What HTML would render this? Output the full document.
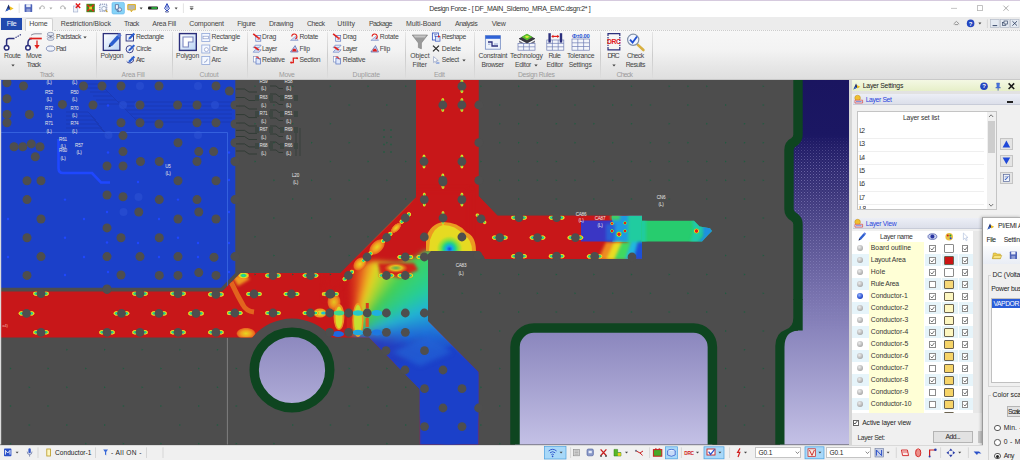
<!DOCTYPE html><html><head><meta charset="utf-8"><title>Design Force</title><style>
html,body{margin:0;padding:0}
body{width:1020px;height:460px;overflow:hidden;position:relative;background:#fff;font-family:"Liberation Sans",sans-serif;font-size:7.4px;color:#3a3a3a;line-height:1}
.a{position:absolute;white-space:nowrap}
.t{position:absolute;white-space:nowrap;font-size:7.4px;color:#444;letter-spacing:-0.15px}
.g{position:absolute;white-space:nowrap;font-size:7.2px;color:#9a9a9a;letter-spacing:-0.1px}
.c{text-align:center}
svg{position:absolute;left:0;top:0}
</style></head><body><div id="wrap" style="position:absolute;left:0;top:0;width:1020px;height:460px">
<div class="a" style="left:0;top:0;width:1020px;height:1px;background:#d6cade"></div>
<div class="a" style="left:0;top:1px;width:1020px;height:16px;background:#fff"></div>
<div class="a" style="left:0;top:17px;width:1020px;height:13px;background:#ececec"></div>
<div class="a" style="left:0;top:30px;width:1020px;height:50px;background:linear-gradient(#f7f7f7,#f3f3f3 40%,#e6e6e6 75%,#dedede)"></div>
<div class="a" style="left:0;top:79px;width:1020px;height:1px;background:#c9c9c9"></div>
<div class="a" style="left:54px;top:30px;width:966px;height:0;border-top:1px dotted #cdcdcd"></div>
<div class="a" style="left:1px;top:18px;width:21px;height:12px;background:#2049ae"></div>
<div class="a" style="left:25px;top:18px;width:28px;height:13px;background:#fbfbfb;border:1px solid #d2d2d2;border-bottom:none;box-sizing:border-box;border-radius:2px 2px 0 0"></div>
<div class="a" style="left:29.30px;top:19.94px;font-size:7.00px;letter-spacing:-0.090px;color:#444;">Home</div>
<div class="a" style="left:60.70px;top:19.94px;font-size:7.00px;letter-spacing:-0.114px;color:#444;">Restriction/Block</div>
<div class="a" style="left:124.00px;top:19.94px;font-size:7.00px;letter-spacing:-0.485px;color:#444;">Track</div>
<div class="a" style="left:152.30px;top:19.94px;font-size:7.00px;letter-spacing:-0.246px;color:#444;">Area Fill</div>
<div class="a" style="left:189.30px;top:19.94px;font-size:7.00px;letter-spacing:-0.186px;color:#444;">Component</div>
<div class="a" style="left:237.30px;top:19.94px;font-size:7.00px;letter-spacing:-0.288px;color:#444;">Figure</div>
<div class="a" style="left:269.00px;top:19.94px;font-size:7.00px;letter-spacing:-0.229px;color:#444;">Drawing</div>
<div class="a" style="left:307.00px;top:19.94px;font-size:7.00px;letter-spacing:-0.460px;color:#444;">Check</div>
<div class="a" style="left:337.30px;top:19.94px;font-size:7.00px;letter-spacing:0.098px;color:#444;">Utility</div>
<div class="a" style="left:369.00px;top:19.94px;font-size:7.00px;letter-spacing:-0.657px;color:#444;">Package</div>
<div class="a" style="left:406.00px;top:19.94px;font-size:7.00px;letter-spacing:-0.079px;color:#444;">Multi-Board</div>
<div class="a" style="left:455.00px;top:19.94px;font-size:7.00px;letter-spacing:-0.481px;color:#444;">Analysis</div>
<div class="a" style="left:491.70px;top:19.94px;font-size:7.00px;letter-spacing:-0.349px;color:#444;">View</div>
<div class="a" style="left:6.70px;top:19.94px;font-size:7.00px;letter-spacing:-0.426px;color:#eef2fc;">File</div>
<div class="a" style="left:429.30px;top:5.44px;font-size:7.00px;letter-spacing:-0.365px;color:#333;">Design Force - [ DF_MAIN_SIdemo_MRA_EMC.dsgn:2* ]</div>
<div class="a" style="left:4.10px;top:53.06px;font-size:6.80px;letter-spacing:-0.336px;color:#444444;">Route</div>
<div class="a" style="left:25.90px;top:53.06px;font-size:6.80px;letter-spacing:-0.242px;color:#444444;">Move</div>
<div class="a" style="left:26.80px;top:62.06px;font-size:6.80px;letter-spacing:-0.637px;color:#444444;">Track</div>
<div class="a" style="left:100.40px;top:53.06px;font-size:6.80px;letter-spacing:-0.245px;color:#444444;">Polygon</div>
<div class="a" style="left:176.10px;top:53.06px;font-size:6.80px;letter-spacing:-0.245px;color:#444444;">Polygon</div>
<div class="a" style="left:410.20px;top:53.06px;font-size:6.80px;letter-spacing:-0.050px;color:#444444;">Object</div>
<div class="a" style="left:412.50px;top:62.06px;font-size:6.80px;letter-spacing:-0.142px;color:#444444;">Filter</div>
<div class="a" style="left:478.60px;top:53.06px;font-size:6.80px;letter-spacing:-0.232px;color:#444444;">Constraint</div>
<div class="a" style="left:481.50px;top:62.06px;font-size:6.80px;letter-spacing:-0.406px;color:#444444;">Browser</div>
<div class="a" style="left:510.10px;top:53.06px;font-size:6.80px;letter-spacing:-0.189px;color:#444444;">Technology</div>
<div class="a" style="left:515.10px;top:62.06px;font-size:6.80px;letter-spacing:-0.293px;color:#444444;">Editor</div>
<div class="a" style="left:548.40px;top:53.06px;font-size:6.80px;letter-spacing:-0.528px;color:#444444;">Rule</div>
<div class="a" style="left:546.50px;top:62.06px;font-size:6.80px;letter-spacing:-0.213px;color:#444444;">Editor</div>
<div class="a" style="left:566.90px;top:53.06px;font-size:6.80px;letter-spacing:-0.223px;color:#444444;">Tolerance</div>
<div class="a" style="left:568.70px;top:62.06px;font-size:6.80px;letter-spacing:-0.210px;color:#444444;">Settings</div>
<div class="a" style="left:607.50px;top:53.06px;font-size:6.80px;letter-spacing:-1.316px;color:#444444;">DRC</div>
<div class="a" style="left:627.00px;top:53.06px;font-size:6.80px;letter-spacing:-0.543px;color:#444444;">Check</div>
<div class="a" style="left:625.70px;top:62.06px;font-size:6.80px;letter-spacing:-0.496px;color:#444444;">Results</div>
<div class="a" style="left:56.00px;top:34.06px;font-size:6.80px;letter-spacing:-0.381px;color:#444444;">Padstack</div>
<div class="a" style="left:56.00px;top:45.66px;font-size:6.80px;letter-spacing:-0.949px;color:#444444;">Pad</div>
<div class="a" style="left:135.90px;top:34.06px;font-size:6.80px;letter-spacing:-0.302px;color:#444444;">Rectangle</div>
<div class="a" style="left:135.90px;top:45.66px;font-size:6.80px;letter-spacing:-0.336px;color:#444444;">Circle</div>
<div class="a" style="left:135.90px;top:57.06px;font-size:6.80px;letter-spacing:-0.700px;color:#444444;">Arc</div>
<div class="a" style="left:211.60px;top:34.06px;font-size:6.80px;letter-spacing:-0.252px;color:#444444;">Rectangle</div>
<div class="a" style="left:211.60px;top:45.66px;font-size:6.80px;letter-spacing:-0.256px;color:#444444;">Circle</div>
<div class="a" style="left:211.60px;top:57.06px;font-size:6.80px;letter-spacing:-0.500px;color:#444444;">Arc</div>
<div class="a" style="left:262.00px;top:34.06px;font-size:6.80px;letter-spacing:-0.146px;color:#444444;">Drag</div>
<div class="a" style="left:262.00px;top:45.66px;font-size:6.80px;letter-spacing:-0.452px;color:#444444;">Layer</div>
<div class="a" style="left:262.00px;top:57.06px;font-size:6.80px;letter-spacing:-0.224px;color:#444444;">Relative</div>
<div class="a" style="left:299.40px;top:34.06px;font-size:6.80px;letter-spacing:-0.207px;color:#444444;">Rotate</div>
<div class="a" style="left:299.40px;top:45.66px;font-size:6.80px;letter-spacing:-0.119px;color:#444444;">Flip</div>
<div class="a" style="left:299.40px;top:57.06px;font-size:6.80px;letter-spacing:-0.247px;color:#444444;">Section</div>
<div class="a" style="left:342.80px;top:34.06px;font-size:6.80px;letter-spacing:-0.313px;color:#444444;">Drag</div>
<div class="a" style="left:342.80px;top:45.66px;font-size:6.80px;letter-spacing:-0.552px;color:#444444;">Layer</div>
<div class="a" style="left:342.80px;top:57.06px;font-size:6.80px;letter-spacing:-0.267px;color:#444444;">Relative</div>
<div class="a" style="left:379.70px;top:34.06px;font-size:6.80px;letter-spacing:-0.187px;color:#444444;">Rotate</div>
<div class="a" style="left:379.70px;top:45.66px;font-size:6.80px;letter-spacing:-0.119px;color:#444444;">Flip</div>
<div class="a" style="left:441.70px;top:34.06px;font-size:6.80px;letter-spacing:-0.453px;color:#444444;">Reshape</div>
<div class="a" style="left:441.70px;top:45.66px;font-size:6.80px;letter-spacing:-0.071px;color:#444444;">Delete</div>
<div class="a" style="left:441.70px;top:57.06px;font-size:6.80px;letter-spacing:-0.280px;color:#444444;">Select</div>
<div class="a" style="left:39.70px;top:72.06px;font-size:6.80px;letter-spacing:-0.562px;color:#9c9c9c;">Track</div>
<div class="a" style="left:121.60px;top:72.06px;font-size:6.80px;letter-spacing:-0.230px;color:#9c9c9c;">Area Fill</div>
<div class="a" style="left:199.60px;top:72.06px;font-size:6.80px;letter-spacing:-0.207px;color:#9c9c9c;">Cutout</div>
<div class="a" style="left:279.00px;top:72.06px;font-size:6.80px;letter-spacing:-0.276px;color:#9c9c9c;">Move</div>
<div class="a" style="left:352.60px;top:72.06px;font-size:6.80px;letter-spacing:-0.106px;color:#9c9c9c;">Duplicate</div>
<div class="a" style="left:433.90px;top:72.06px;font-size:6.80px;letter-spacing:-0.206px;color:#9c9c9c;">Edit</div>
<div class="a" style="left:517.90px;top:72.06px;font-size:6.80px;letter-spacing:-0.313px;color:#9c9c9c;">Design Rules</div>
<div class="a" style="left:616.40px;top:72.06px;font-size:6.80px;letter-spacing:-0.668px;color:#9c9c9c;">Check</div>
<div class="a" style="left:95.6px;top:32px;width:1px;height:46px;background:linear-gradient(#e4e4e4,#c8c8c8 50%,#dcdcdc);opacity:.9"></div>
<div class="a" style="left:171.8px;top:32px;width:1px;height:46px;background:linear-gradient(#e4e4e4,#c8c8c8 50%,#dcdcdc);opacity:.9"></div>
<div class="a" style="left:246.7px;top:32px;width:1px;height:46px;background:linear-gradient(#e4e4e4,#c8c8c8 50%,#dcdcdc);opacity:.9"></div>
<div class="a" style="left:327.1px;top:32px;width:1px;height:46px;background:linear-gradient(#e4e4e4,#c8c8c8 50%,#dcdcdc);opacity:.9"></div>
<div class="a" style="left:405.0px;top:32px;width:1px;height:46px;background:linear-gradient(#e4e4e4,#c8c8c8 50%,#dcdcdc);opacity:.9"></div>
<div class="a" style="left:473.5px;top:32px;width:1px;height:46px;background:linear-gradient(#e4e4e4,#c8c8c8 50%,#dcdcdc);opacity:.9"></div>
<div class="a" style="left:599.8px;top:32px;width:1px;height:46px;background:linear-gradient(#e4e4e4,#c8c8c8 50%,#dcdcdc);opacity:.9"></div>
<div class="a" style="left:651.7px;top:32px;width:1px;height:46px;background:linear-gradient(#e4e4e4,#c8c8c8 50%,#dcdcdc);opacity:.9"></div>
<svg width="4" height="3" style="left:10.6px;top:63.9px" viewBox="0 0 4 3"><path d="M0.3 0.4 L3.7 0.4 L2 2.6 Z" fill="#444"/></svg>
<svg width="4" height="3" style="left:83.4px;top:35.9px" viewBox="0 0 4 3"><path d="M0.3 0.4 L3.7 0.4 L2 2.6 Z" fill="#444"/></svg>
<svg width="4" height="3" style="left:461.8px;top:58.9px" viewBox="0 0 4 3"><path d="M0.3 0.4 L3.7 0.4 L2 2.6 Z" fill="#444"/></svg>
<svg width="4" height="3" style="left:533.5px;top:63.9px" viewBox="0 0 4 3"><path d="M0.3 0.4 L3.7 0.4 L2 2.6 Z" fill="#444"/></svg>
<svg width="4" height="3" style="left:611.6px;top:63.9px" viewBox="0 0 4 3"><path d="M0.3 0.4 L3.7 0.4 L2 2.6 Z" fill="#444"/></svg>
<svg width="1020" height="80" viewBox="0 0 1020 80" style="left:0;top:0">
<defs><linearGradient id="pg" x1="0" y1="0" x2="1" y2="1"><stop offset="0" stop-color="#ffffff"/><stop offset="1" stop-color="#b9d3f4"/></linearGradient></defs>
<g fill="none" stroke="#2b2f7c" stroke-width="1.5"><circle cx="6.6" cy="47.8" r="2.3" fill="#fff"/><path d="M6.6 45.3 L6.6 40.5 Q6.6 38.4 9 38.4 L14.5 38.4"/><path d="M15.5 37.6 L21.5 34.2" stroke-width="1.1" stroke-dasharray="1.4 1"/></g>
<g fill="none"><path d="M31 35.2 Q33 33.8 35 33.8 L41.8 33.8" stroke="#8a8a9a" stroke-width="1"/><circle cx="28" cy="47.8" r="2.3" fill="#fff" stroke="#2b2f7c" stroke-width="1.5"/><path d="M28 45.3 L28 42 Q28.5 38.6 32 38.4" stroke="#2b2f7c" stroke-width="1.5"/><path d="M29.5 38.5 L41.8 38.5" stroke="#e0201c" stroke-width="1.7"/><path d="M37 40.5 L37 46" stroke="#e0201c" stroke-width="1.3"/><path d="M34.4 45 L39.6 45 L37 49 Z" fill="#e0201c"/></g>
<g><rect x="103.3" y="33.6" width="16.6" height="16.8" fill="url(#pg)" stroke="#2b2f7c" stroke-width="1.3"/><path d="M109.5 43.8 L117.2 35.3 L120.3 37.6 L112.4 45.8 L108.6 47.2 Z" fill="#2c5fd0"/><path d="M117 35 L119 33 L121.6 35.2 L120 37.4 Z" fill="#5a7ad8"/><path d="M108.6 47.2 L109.3 44.6 L111 46.3 Z" fill="#223"/></g>
<g><rect x="179.5" y="33.6" width="16.8" height="16.8" fill="url(#pg)" stroke="#2b2f7c" stroke-width="1.4"/><path d="M183 37 L193 37 L193 42 L188.4 42 L188.4 47 L183 47 Z" fill="#fff" stroke="#7a86c0" stroke-width="1.1"/></g>
<path d="M412.2 35 L427.6 35 L421.4 43 L421.4 48.8 L418.4 47.6 L418.4 43 Z" fill="#9a9a9a" stroke="#7a7a7a" stroke-width="0.6"/><path d="M413.5 35.6 L426.3 35.6 L424.6 37.6 L415.2 37.6 Z" fill="#c4c4c4"/>
<g><rect x="485.4" y="35.6" width="15" height="13.6" fill="#eef3fb" stroke="#7f95c8" stroke-width="0.9"/><rect x="485.4" y="35.6" width="15" height="3.2" fill="#2f62d6"/><path d="M488 42 L492 42 L492 46 L498 46" fill="none" stroke="#2b2f7c" stroke-width="1.3"/><path d="M488 44.2 L490.4 44.2 M494 44 L498 44" stroke="#7f95c8" stroke-width="0.8"/></g>
<g><path d="M519 38.5 L527 34 L535 38.5 L527 43 Z" fill="#3a3a44"/><path d="M519 40.5 L527 45 L535 40.5 L535 42.2 L527 46.6 L519 42.2 Z" fill="#6c6c7c"/><path d="M521.5 37 L527 33.8 L532.5 37 L527 40.2 Z" fill="#58c22c"/><path d="M524.5 36.8 L527 35.4 L529.5 36.8 L527 38.2 Z" fill="#d8e83c"/><rect x="518" y="43.4" width="17" height="6.8" fill="#f4f6fb" stroke="#6f7db4" stroke-width="0.7"/><path d="M518 46.8 L535 46.8 M523.6 43.4 L523.6 50.2 M529.3 43.4 L529.3 50.2" stroke="#6f7db4" stroke-width="0.7"/><path d="M519 38.5 L527 43 L535 38.5" fill="none" stroke="#22222c" stroke-width="0.8"/></g>
<g><rect x="546.8" y="40" width="17" height="10.2" fill="#f4f6fb" stroke="#6f7db4" stroke-width="0.7"/><path d="M546.8 43.4 L563.8 43.4 M546.8 46.8 L563.8 46.8 M552.4 40 L552.4 50.2 M558.2 40 L558.2 50.2" stroke="#6f7db4" stroke-width="0.7"/><rect x="548.4" y="33.2" width="2.4" height="9.4" fill="#2b2f7c"/><rect x="559.8" y="33.2" width="2.4" height="9.4" fill="#2b2f7c"/><path d="M552 36.4 L558.6 36.4" stroke="#e0201c" stroke-width="1.2"/><path d="M551.2 36.4 L553.4 34.8 L553.4 38 Z M559.4 36.4 L557.2 34.8 L557.2 38 Z" fill="#e0201c"/></g>
<g><rect x="572" y="39" width="17.4" height="11.2" fill="#f4f6fb" stroke="#6f7db4" stroke-width="0.7"/><path d="M572 42.8 L589.4 42.8 M572 46.5 L589.4 46.5 M577.8 39 L577.8 50.2 M583.6 39 L583.6 50.2" stroke="#6f7db4" stroke-width="0.7"/><text x="580.7" y="38" font-family="Liberation Sans, sans-serif" font-weight="bold" font-size="5.8" fill="#1f4fd0" text-anchor="middle" letter-spacing="-0.3">Φ±0.00</text></g>
<g><path d="M608 36 L608 33.6 L619.8 33.6 L619.8 36 M608 47 L608 49.8 L619.8 49.8 L619.8 47" fill="none" stroke="#2b2f7c" stroke-width="1.2"/><path d="M608 37 L608 46 M619.8 37 L619.8 46" stroke="#2b2f7c" stroke-width="1.2" stroke-dasharray="1.4 1.2"/><text x="613.7" y="44.2" font-family="Liberation Sans, sans-serif" font-weight="bold" font-size="6.8" fill="#e0201c" text-anchor="middle" letter-spacing="-0.5">DRC</text></g>
<g><path d="M637.6 44.6 L643.4 50" stroke="#d8b040" stroke-width="2.6" stroke-linecap="round"/><circle cx="633.2" cy="39.8" r="5.6" fill="#f2f6ff" stroke="#8090a8" stroke-width="1.2"/><path d="M630 39.6 L632.6 42.6 L637 36.4" fill="none" stroke="#1f4fd0" stroke-width="1.8"/></g>
<g fill="#e8ecf4" stroke="#7c87a8" stroke-width="0.7"><ellipse cx="50.6" cy="38.8" rx="3.4" ry="1.6"/><ellipse cx="50.6" cy="36.4" rx="3.4" ry="1.6"/><ellipse cx="50.6" cy="34" rx="3.4" ry="1.6"/></g><path d="M49 36.2 L52.2 36.2 L50.6 37.6 Z" fill="#445"/>
<ellipse cx="50.6" cy="48.6" rx="4.2" ry="2.6" fill="#eef2fa" stroke="#6f80b0" stroke-width="0.9"/>
<rect x="126.1" y="34.6" width="7.4" height="6.4" fill="#eef3fc" stroke="#2b2f7c" stroke-width="0.9"/>
<path d="M128.9 37.6 l4.6 -4.8 l1.6 1.4 l-4.6 4.8 l-2.2 0.8 z" fill="#2c5fd0"/>
<circle cx="129.7" cy="49.2" r="3.6" fill="#eef3fc" stroke="#2b2f7c" stroke-width="0.9"/>
<path d="M128.9 49.2 l4.6 -4.8 l1.6 1.4 l-4.6 4.8 l-2.2 0.8 z" fill="#2c5fd0"/>
<path d="M126.7 61.4 a3.6 3 0 1 0 5 -4" fill="#dfe8fa" stroke="#2b2f7c" stroke-width="0.9"/>
<path d="M128.9 60.6 l4.6 -4.8 l1.6 1.4 l-4.6 4.8 l-2.2 0.8 z" fill="#2c5fd0"/>
<rect x="201.8" y="33.4" width="8" height="8" fill="#f4f8ff" stroke="#8fa6d8" stroke-width="0.8"/>
<rect x="203.0" y="36.2" width="5.6" height="2.6" fill="#fff" stroke="#7a8cc0" stroke-width="0.6"/>
<rect x="201.8" y="45.0" width="8" height="8" fill="#f4f8ff" stroke="#8fa6d8" stroke-width="0.8"/>
<circle cx="206.4" cy="49.6" r="2" fill="#fff" stroke="#7a8cc0" stroke-width="0.6"/>
<rect x="201.8" y="56.4" width="8" height="8" fill="#f4f8ff" stroke="#8fa6d8" stroke-width="0.8"/>
<path d="M204.0 62.4 q3 -0.4 3.4 -3.6" fill="none" stroke="#7a8cc0" stroke-width="0.7"/>
<rect x="255.8" y="35.6" width="5" height="5.6" fill="#f4f8ff" stroke="#5570c0" stroke-width="0.7"/><path d="M253.2 33.8 l5.4 4.4" stroke="#e0201c" stroke-width="1.6"/><path d="M257.2 39.6 l2.6 0 l0 -2.6 z" fill="#e0201c"/>
<path d="M255.2 45.2 l6 0 l-2 2.4 l-6 0 z" fill="#dfe8fa" stroke="#5570c0" stroke-width="0.6"/><path d="M255.2 49.8 l6 0 l-2 2.4 l-6 0 z" fill="#dfe8fa" stroke="#5570c0" stroke-width="0.6"/><path d="M254.4 47.0 l4.4 3" stroke="#e0201c" stroke-width="1.6"/>
<rect x="253.4" y="56.4" width="4.6" height="5.6" fill="#fff" stroke="#7a8cc0" stroke-width="0.6"/><rect x="256.0" y="58.4" width="4.6" height="5.6" fill="#dfe8fa" stroke="#5570c0" stroke-width="0.7"/><path d="M255.8 57.0 q3 -0.6 3.6 2.4" fill="none" stroke="#e0201c" stroke-width="1"/>
<rect x="335.7" y="35.6" width="5" height="5.6" fill="#f4f8ff" stroke="#5570c0" stroke-width="0.7"/><path d="M333.1 33.8 l5.4 4.4" stroke="#e0201c" stroke-width="1.6"/><path d="M337.1 39.6 l2.6 0 l0 -2.6 z" fill="#e0201c"/>
<path d="M335.1 45.2 l6 0 l-2 2.4 l-6 0 z" fill="#dfe8fa" stroke="#5570c0" stroke-width="0.6"/><path d="M335.1 49.8 l6 0 l-2 2.4 l-6 0 z" fill="#dfe8fa" stroke="#5570c0" stroke-width="0.6"/><path d="M334.3 47.0 l4.4 3" stroke="#e0201c" stroke-width="1.6"/>
<rect x="333.3" y="56.4" width="4.6" height="5.6" fill="#fff" stroke="#7a8cc0" stroke-width="0.6"/><rect x="335.9" y="58.4" width="4.6" height="5.6" fill="#dfe8fa" stroke="#5570c0" stroke-width="0.7"/><path d="M335.7 57.0 q3 -0.6 3.6 2.4" fill="none" stroke="#e0201c" stroke-width="1"/>
<path d="M290.5 40.4 l7.6 0 l-2.6 -4 z" fill="#c9d6f4" stroke="#6678b8" stroke-width="0.5"/><path d="M291.7 36.6 a2.6 2.6 0 1 1 3.6 2.4" fill="none" stroke="#e0201c" stroke-width="1.1"/>
<path d="M290.5 52.0 l7.6 0 l-3 -6.4 z" fill="#c9d6f4" stroke="#3a4a9a" stroke-width="0.6"/><path d="M291.9 51.6 l5 0 l-1.4 -2.8 l-2.2 0 z" fill="#e0201c"/>
<path d="M290.9 62.6 l2.4 0 l0 -4.4 l3.6 0" fill="none" stroke="#e0201c" stroke-width="1.3"/><circle cx="291.1" cy="62.6" r="1" fill="#e0201c"/><circle cx="297.1" cy="58.2" r="1" fill="#e0201c"/>
<path d="M370.9 40.4 l7.6 0 l-2.6 -4 z" fill="#c9d6f4" stroke="#6678b8" stroke-width="0.5"/><path d="M372.1 36.6 a2.6 2.6 0 1 1 3.6 2.4" fill="none" stroke="#e0201c" stroke-width="1.1"/>
<path d="M370.9 52.0 l7.6 0 l-3 -6.4 z" fill="#c9d6f4" stroke="#3a4a9a" stroke-width="0.6"/><path d="M372.3 51.6 l5 0 l-1.4 -2.8 l-2.2 0 z" fill="#e0201c"/>
<rect x="432.4" y="33" width="6" height="7" fill="#f4f8ff" stroke="#3f5cc0" stroke-width="0.9"/><rect x="435.4" y="36.6" width="4.6" height="4.6" fill="#d8e4fa" stroke="#3f5cc0" stroke-width="0.7"/><path d="M434 34.6 l3 0 M434 36 l2 0" stroke="#3f5cc0" stroke-width="0.6"/><circle cx="438.8" cy="36.4" r="1" fill="#e0201c"/>
<path d="M433 45.6 L439 51.4 M439 45.6 L433 51.4" stroke="#2a2a2a" stroke-width="1.3"/>
<path d="M433.6 56.6 L433.6 62.6 L435.2 61.2 L436.4 63.6 L437.4 63 L436.2 60.8 L438.2 60.6 Z" fill="#fff" stroke="#7f8fb8" stroke-width="0.6"/><rect x="436.4" y="62" width="3" height="2" fill="#9ab0e0"/>
<path d="M5.4 11.6 L8.6 4.4 L10 7.4 L12.6 8.6 L9.6 9.6 Z" fill="#1c2a6c"/><path d="M9.6 6.2 L13.6 8.4 L10 10.6 Z" fill="#f0c020"/><path d="M5.4 11.6 L9.6 9.6 L8 8 Z" fill="#3a70d8"/>
<path d="M19.2 3.4 L19.2 13" stroke="#dcdcdc" stroke-width="0.8"/>
<rect x="24.6" y="4.2" width="7.6" height="7.8" rx="0.6" fill="#4c62b8"/><rect x="26.2" y="4.2" width="4.4" height="3" fill="#e8ecf8"/><rect x="26.4" y="8.6" width="4" height="3.4" fill="#8e9cd4"/>
<path d="M40 8.6 q0.4 -3.4 3.4 -2.6 q1.6 0.8 0.6 3" fill="none" stroke="#b0b0b0" stroke-width="1"/><path d="M38.8 7.4 l2.6 0.4 l-1.6 2 z" fill="#b0b0b0"/>
<path d="M49.4 7.6 l3 0 l-1.5 1.8 z" fill="#a8a8a8"/>
<path d="M65 8.6 q-0.4 -3.4 -3.4 -2.6 q-1.6 0.8 -0.6 3" fill="none" stroke="#b0b0b0" stroke-width="1"/><path d="M66.2 7.4 l-2.6 0.4 l1.6 2 z" fill="#b0b0b0"/>
<rect x="73.6" y="6" width="4.2" height="6" fill="#eef2fa" stroke="#9aa8c8" stroke-width="0.6"/><path d="M75.8 3.6 L80.2 8 M80.2 3.6 L75.8 8" stroke="#e01818" stroke-width="1.4"/>
<rect x="86.4" y="3.8" width="8.4" height="8.4" fill="#3c8c1c"/><path d="M87.4 4.8 L93.8 11.2 M93.8 4.8 L87.4 11.2" stroke="#e02818" stroke-width="1.6"/><rect x="89.2" y="6.6" width="2.8" height="2.8" fill="#e8d020"/>
<rect x="99.8" y="4.2" width="7" height="7" fill="#eef4fc" stroke="#5a6a9c" stroke-width="0.8" stroke-dasharray="1.2 0.8"/><circle cx="104" cy="8.6" r="2.2" fill="#f8fbff" stroke="#8898b8" stroke-width="0.7"/><path d="M105.6 10.2 l1.8 1.8" stroke="#c8a030" stroke-width="1.1"/>
<rect x="112" y="2.4" width="12.4" height="11.6" rx="1.4" fill="#86d3f7" stroke="#5ab4ec" stroke-width="0.6"/><path d="M115.4 4.6 l3 0 l0 3.6 l-1 1 l-2 0 z" fill="#f4f8ff" stroke="#4a5a8c" stroke-width="0.7"/><circle cx="119.8" cy="9.6" r="1.8" fill="#e8eef8" stroke="#4a5a8c" stroke-width="0.7"/><path d="M117 9.2 l0 2 l2 0.6" fill="none" stroke="#4a5a8c" stroke-width="0.7"/>
<path d="M127.8 4.6 L135.4 4.6 L135.4 9.8 L132.6 9.8 L131.4 11.8 L130.6 9.8 L127.8 9.8 Z" fill="#b8b8b0" stroke="#e0b020" stroke-width="1"/>
<path d="M139.6 7.6 l3 0 l-1.5 1.8 z" fill="#444"/>
<rect x="148" y="6.6" width="10" height="2.8" rx="1" fill="#1c1c1c"/><rect x="151.4" y="7.2" width="5.8" height="1.6" fill="#30c040"/>
<path d="M167 3.6 L169.4 8.4 L167 11 L164.6 8.4 Z" fill="#dfe6fa" stroke="#2a44b8" stroke-width="1"/><path d="M167 5.4 L167 9" stroke="#2a44b8" stroke-width="0.7"/><path d="M165 11.6 q2 1 4 0" fill="none" stroke="#1c2c7c" stroke-width="0.8"/>
<path d="M174.6 7.6 l3 0 l-1.5 1.8 z" fill="#444"/>
<path d="M183.4 3.4 L183.4 13" stroke="#dcdcdc" stroke-width="0.8"/>
<path d="M189.8 6.6 l3.6 0 M190 8 l3.2 0 l-1.6 2 z" stroke="#666" stroke-width="0.7" fill="#666"/>
<path d="M951 8.4 L957 8.4" stroke="#b8b8b8" stroke-width="0.8"/><rect x="977.6" y="5.6" width="5" height="5" fill="none" stroke="#b4b4b4" stroke-width="0.8"/><path d="M1003.4 5.6 L1008.6 10.8 M1008.6 5.6 L1003.4 10.8" stroke="#9c9c9c" stroke-width="0.8"/>
<path d="M953.6 24 L956.4 21.4 L959.2 24 M954.6 24.6 L958.2 24.6" fill="none" stroke="#8a8a8a" stroke-width="0.9"/>
<circle cx="970.6" cy="23.4" r="3.8" fill="#2346c0"/><text x="970.6" y="25.6" font-family="Liberation Sans, sans-serif" font-weight="bold" font-size="6" fill="#fff" text-anchor="middle">?</text>
<path d="M978.4 22.6 l3 0 l-1.5 1.8 z" fill="#444"/>
<path d="M987.4 19.4 L987.4 28" stroke="#d0d0d0" stroke-width="0.8"/>
<rect x="990.6" y="19.4" width="8.6" height="8" fill="#e4eaf2" stroke="#b4bcc8" stroke-width="0.7"/>
<rect x="1000.6" y="19.4" width="8.6" height="8" fill="#e4eaf2" stroke="#b4bcc8" stroke-width="0.7"/>
<rect x="1010.4" y="19.4" width="8.6" height="8" fill="#e4eaf2" stroke="#b4bcc8" stroke-width="0.7"/>
<path d="M992.6 25.6 l4.6 0" stroke="#3a4a6a" stroke-width="1"/>
<rect x="1002.4" y="22.6" width="3.4" height="3" fill="none" stroke="#3a4a6a" stroke-width="0.7"/><rect x="1004" y="21" width="3.4" height="3" fill="#e4eaf2" stroke="#3a4a6a" stroke-width="0.7"/>
<path d="M1012.4 21.2 l4.6 4.4 M1017 21.2 l-4.6 4.4" stroke="#3a4a6a" stroke-width="0.9"/>
</svg>
<div class="a" style="left:0;top:80px;width:850px;height:365px;background:#4d4d4d"></div>
<svg width="850" height="460" viewBox="0 0 850 460" style="left:0;top:0">
<defs>
<clipPath id="cv"><rect x="0" y="80" width="850" height="364.6"/></clipPath>
<linearGradient id="lav" gradientUnits="userSpaceOnUse" x1="0" y1="80" x2="0" y2="445">
<stop offset="0" stop-color="#1a1560"/><stop offset="0.15" stop-color="#1b1763"/><stop offset="0.30" stop-color="#383278"/><stop offset="0.42" stop-color="#544e8f"/><stop offset="0.55" stop-color="#706aa7"/><stop offset="0.68" stop-color="#8984bc"/><stop offset="0.8" stop-color="#9e9acb"/><stop offset="1" stop-color="#c4c1e6"/></linearGradient>
<filter color-interpolation-filters="sRGB" id="b4" x="-30%" y="-30%" width="160%" height="160%"><feGaussianBlur color-interpolation-filters="sRGB" stdDeviation="4"/></filter>
<filter color-interpolation-filters="sRGB" id="b3" x="-30%" y="-30%" width="160%" height="160%"><feGaussianBlur color-interpolation-filters="sRGB" stdDeviation="2.6"/></filter>
<filter color-interpolation-filters="sRGB" id="b2" x="-30%" y="-30%" width="160%" height="160%"><feGaussianBlur color-interpolation-filters="sRGB" stdDeviation="1.5"/></filter>
<filter color-interpolation-filters="sRGB" id="b1" x="-30%" y="-30%" width="160%" height="160%"><feGaussianBlur color-interpolation-filters="sRGB" stdDeviation="0.7"/></filter>
<radialGradient id="halo"><stop offset="0" stop-color="#18b8e8"/><stop offset="0.35" stop-color="#30d868"/><stop offset="0.65" stop-color="#e8e020"/><stop offset="0.9" stop-color="#f08a20" stop-opacity="0.8"/><stop offset="1" stop-color="#e05020" stop-opacity="0"/></radialGradient>
<radialGradient id="halo2"><stop offset="0" stop-color="#30d868"/><stop offset="0.5" stop-color="#e8e020"/><stop offset="1" stop-color="#f08a20" stop-opacity="0"/></radialGradient>
<radialGradient id="blob"><stop offset="0" stop-color="#1848d8"/><stop offset="0.18" stop-color="#18a0e8"/><stop offset="0.36" stop-color="#20d090"/><stop offset="0.55" stop-color="#80e040"/><stop offset="0.8" stop-color="#e0dc22"/><stop offset="1" stop-color="#e6da22" stop-opacity="0"/></radialGradient>
<radialGradient id="oy"><stop offset="0" stop-color="#e8d820"/><stop offset="0.5" stop-color="#f0a020"/><stop offset="0.85" stop-color="#e86820"/><stop offset="1" stop-color="#e04818" stop-opacity="0"/></radialGradient>
<radialGradient id="hot"><stop offset="0" stop-color="#e81818"/><stop offset="0.4" stop-color="#e82018"/><stop offset="0.6" stop-color="#f0d020"/><stop offset="0.8" stop-color="#30d870"/><stop offset="1" stop-color="#20b0e0" stop-opacity="0"/></radialGradient>
<pattern id="dth" width="3" height="3" patternUnits="userSpaceOnUse"><rect x="0" y="0" width="1" height="1" fill="#9a96cc"/><rect x="1.5" y="1.5" width="1" height="1" fill="#9a96cc" opacity="0.6"/></pattern>
<linearGradient id="dmg" gradientUnits="userSpaceOnUse" x1="0" y1="135" x2="0" y2="330"><stop offset="0" stop-color="#000"/><stop offset="0.2" stop-color="#fff" stop-opacity="0.55"/><stop offset="0.5" stop-color="#fff" stop-opacity="0.45"/><stop offset="1" stop-color="#000"/></linearGradient>
<mask id="dm" maskUnits="userSpaceOnUse" x="780" y="80" width="80" height="370"><rect x="780" y="135" width="80" height="195" fill="url(#dmg)"/></mask>
<clipPath id="rr"><path d="M798 70 L798 134 A9 9 0 0 1 794 142 A9 9 0 0 0 789 150 L789 209 A9 9 0 0 0 794 217 A9 9 0 0 1 798 225 L798 331 L784 331 L780 344 L780 455 L870 455 L870 70 Z"/></clipPath>
<clipPath id="cu"><path d="M-5 291.4 L222 291.4 L240.5 273 L340.5 273 L416 197.5 L416 75 L478.5 75 L478.5 196 L497.5 215.7 L642 215.7 L642 259 L485 259 L484 256.5 L479 251 L431 251 L428 254 L428 321 L478.5 372 L478.5 450 L419.7 450 L419.7 389 L369 337.6 L331.7 337.6 A51 51 0 0 0 252.3 337.6 L-5 337.6 Z"/></clipPath>
</defs>
<g clip-path="url(#cv)">
<path d="M-5 75 L235.3 75 L235.3 273 L221 287.8 L-5 287.8 Z" fill="#1b40c9"/>
<g stroke="#1a39b4" stroke-width="1" fill="none" opacity="0.9">
<path d="M84 84 L100 84 L118 102 L232 102"/>
<path d="M87 88 L104 88 L122 106 L232 106"/>
<path d="M90 92 L108 92 L126 110 L232 110"/>
<path d="M93 96 L112 96 L130 114 L232 114"/>
<path d="M96 100 L116 100 L134 118 L232 118"/>
<path d="M99 104 L120 104 L138 122 L232 122"/>
<path d="M66 112 L88 112 L96 120"/>
<path d="M66 116 L91 116 L99 124"/>
<path d="M66 120 L94 120 L102 128"/>
<path d="M66 124 L97 124 L105 132"/>
<path d="M66 128 L100 128 L108 136"/>
</g>
<circle cx="108" cy="105.5" r="1.2" fill="#1f47ff"/>
<circle cx="108" cy="152.5" r="1.2" fill="#1f47ff"/>
<circle cx="198" cy="152.5" r="1.2" fill="#1f47ff"/>
<circle cx="229" cy="152.5" r="1.2" fill="#1f47ff"/>
<circle cx="229" cy="180" r="1.2" fill="#1f47ff"/>
<circle cx="138" cy="182" r="1.2" fill="#1f47ff"/>
<circle cx="107" cy="212" r="1.2" fill="#1f47ff"/>
<circle cx="107" cy="242.5" r="1.2" fill="#1f47ff"/>
<circle cx="138" cy="243" r="1.2" fill="#1f47ff"/>
<circle cx="198" cy="243" r="1.2" fill="#1f47ff"/>
<circle cx="229" cy="243" r="1.2" fill="#1f47ff"/>
<circle cx="108" cy="272" r="1.2" fill="#1f47ff"/>
<circle cx="229" cy="272" r="1.2" fill="#1f47ff"/>
<circle cx="229" cy="212" r="1.2" fill="#1f47ff"/>
<circle cx="8" cy="219" r="1.2" fill="#1f47ff"/>
<circle cx="8" cy="257" r="1.2" fill="#1f47ff"/>
<circle cx="65" cy="199.6" r="1.2" fill="#1f47ff"/>
<circle cx="65" cy="237.8" r="1.2" fill="#1f47ff"/>
<circle cx="84" cy="219" r="1.2" fill="#1f47ff"/>
<circle cx="84" cy="257" r="1.2" fill="#1f47ff"/>
<circle cx="65" cy="275" r="1.2" fill="#1f47ff"/>
<circle cx="159" cy="219" r="1.2" fill="#1f47ff"/>
<circle cx="159" cy="257" r="1.2" fill="#1f47ff"/>
<circle cx="178" cy="199.6" r="1.2" fill="#1f47ff"/>
<circle cx="178" cy="237.8" r="1.2" fill="#1f47ff"/>
<circle cx="198" cy="257" r="1.2" fill="#1f47ff"/>
<circle cx="138.5" cy="197" r="4" fill="#2a4fd2" opacity="0.7"/>
<circle cx="123.5" cy="212" r="4" fill="#2a4fd2" opacity="0.7"/>
<circle cx="138.5" cy="105" r="4" fill="#2a4fd2" opacity="0.7"/>
<circle cx="108.5" cy="135" r="4" fill="#2a4fd2" opacity="0.7"/>
<circle cx="198" cy="135" r="4" fill="#2a4fd2" opacity="0.7"/>
<circle cx="215" cy="105" r="4" fill="#2a4fd2" opacity="0.7"/>
<circle cx="198" cy="86" r="4" fill="#2a4fd2" opacity="0.7"/>
<circle cx="140" cy="86" r="4" fill="#2a4fd2" opacity="0.7"/>
<circle cx="123" cy="105" r="4" fill="#2a4fd2" opacity="0.7"/>
<path d="M0 132.5 L227.5 132.5 L227.5 287" fill="none" stroke="#3b68e2" stroke-width="0.8"/>
<path d="M58.5 139 L58.5 168 Q58.5 173 63 173 L92 173 L101 182.5 L110 182.5" fill="none" stroke="#1f47ff" stroke-width="2.6"/>
<g clip-path="url(#cu)">
<rect x="-5" y="75" width="700" height="380" fill="#c81719"/>
<g filter="url(#b3)">
<path d="M352.0 337.0 L341.5 187.4 L349.9 187.0 Z" fill="#cb1e1a"/>
<path d="M352.0 337.0 L349.4 187.0 L357.8 187.1 Z" fill="#d22e1a"/>
<path d="M352.0 337.0 L357.2 187.1 L365.6 187.6 Z" fill="#d93c1c"/>
<path d="M352.0 337.0 L365.1 187.6 L373.4 188.5 Z" fill="#e0561e"/>
<path d="M352.0 337.0 L372.9 188.5 L381.1 189.9 Z" fill="#ea7820"/>
<path d="M352.0 337.0 L380.6 189.8 L388.8 191.6 Z" fill="#ed9a22"/>
<path d="M352.0 337.0 L388.3 191.5 L396.4 193.7 Z" fill="#ebbb22"/>
<path d="M352.0 337.0 L395.9 193.6 L403.8 196.2 Z" fill="#e6d623"/>
<path d="M352.0 337.0 L403.3 196.0 L411.1 199.1 Z" fill="#d0d929"/>
<path d="M352.0 337.0 L410.6 198.9 L418.2 202.4 Z" fill="#b9dc2f"/>
<path d="M352.0 337.0 L417.8 202.2 L425.2 206.1 Z" fill="#a2de35"/>
<path d="M352.0 337.0 L424.7 205.8 L431.9 210.1 Z" fill="#8adb3e"/>
<path d="M352.0 337.0 L431.5 209.8 L438.5 214.4 Z" fill="#72d947"/>
<path d="M352.0 337.0 L438.0 214.1 L444.8 219.1 Z" fill="#5bd750"/>
<path d="M352.0 337.0 L444.3 218.8 L450.8 224.1 Z" fill="#43d459"/>
<path d="M352.0 337.0 L450.4 223.8 L456.6 229.5 Z" fill="#3bd463"/>
<path d="M352.0 337.0 L456.2 229.1 L462.1 235.1 Z" fill="#36d36f"/>
<path d="M352.0 337.0 L461.7 234.7 L467.2 241.0 Z" fill="#31d37a"/>
<path d="M352.0 337.0 L466.9 240.6 L472.1 247.1 Z" fill="#2cd385"/>
<path d="M352.0 337.0 L471.8 246.7 L476.6 253.6 Z" fill="#27d290"/>
<path d="M352.0 337.0 L476.4 253.1 L480.8 260.2 Z" fill="#24cf9d"/>
<path d="M352.0 337.0 L480.6 259.7 L484.7 267.0 Z" fill="#23c9ab"/>
<path d="M352.0 337.0 L484.4 266.6 L488.2 274.1 Z" fill="#22c3b9"/>
<path d="M352.0 337.0 L487.9 273.6 L491.3 281.3 Z" fill="#20bdc8"/>
<path d="M352.0 337.0 L491.1 280.8 L494.0 288.7 Z" fill="#1fb7d6"/>
<path d="M352.0 337.0 L493.8 288.2 L496.3 296.2 Z" fill="#1eacd9"/>
<path d="M352.0 337.0 L496.2 295.7 L498.3 303.8 Z" fill="#1e9fd9"/>
<path d="M352.0 337.0 L498.2 303.3 L499.8 311.5 Z" fill="#1d93da"/>
<path d="M352.0 337.0 L499.7 311.0 L500.9 319.2 Z" fill="#1d86db"/>
<path d="M352.0 337.0 L500.9 318.7 L501.7 327.1 Z" fill="#1c7adc"/>
<path d="M352.0 337.0 L501.6 326.5 L502.0 334.9 Z" fill="#1c70d9"/>
<path d="M352.0 337.0 L502.0 334.4 L501.9 342.8 Z" fill="#1c66d6"/>
<path d="M352.0 337.0 L501.9 342.2 L501.4 350.6 Z" fill="#1c5cd2"/>
<path d="M352.0 337.0 L501.4 350.1 L500.5 358.4 Z" fill="#1b52cf"/>
<path d="M352.0 337.0 L500.5 357.9 L499.1 366.1 Z" fill="#1b48cc"/>
<path d="M352.0 337.0 L499.2 365.6 L497.4 373.8 Z" fill="#1b40c9"/>
<path d="M352.0 337.0 L497.5 373.3 L495.3 381.4 Z" fill="#1b40c9"/>
<path d="M352.0 337.0 L495.4 380.9 L492.8 388.8 Z" fill="#1b40c9"/>
<path d="M352.0 337.0 L493.0 388.3 L489.9 396.1 Z" fill="#1b40c9"/>
<path d="M352.0 337.0 L490.1 395.6 L486.6 403.2 Z" fill="#1b40c9"/>
<path d="M352.0 337.0 L486.8 402.8 L482.9 410.2 Z" fill="#1b40c9"/>
<path d="M352.0 337.0 L483.2 409.7 L478.9 416.9 Z" fill="#1b40c9"/>
<path d="M352.0 337.0 L479.2 416.5 L474.6 423.5 Z" fill="#1b40c9"/>
<path d="M352.0 337.0 L474.9 423.0 L469.9 429.8 Z" fill="#1b40c9"/>
<path d="M352.0 337.0 L470.2 429.3 L464.9 435.8 Z" fill="#1b40c9"/>
<path d="M352.0 337.0 L465.2 435.4 L459.5 441.6 Z" fill="#1b40c9"/>
<path d="M352.0 337.0 L459.9 441.2 L453.9 447.1 Z" fill="#1b40c9"/>
<path d="M352.0 337.0 L454.3 446.7 L448.0 452.2 Z" fill="#1b40c9"/>
</g>
<path d="M405 75 L490 75 L490 200 L650 215 L650 262 L470 262 L455 232 L420 215 L412 200 Z" fill="#c81719" filter="url(#b3)"/>
<path d="M325 300 L340 285 L352 268 L372 261 L398 263 L416 257 L424 251 L436 250 L470 246 L470 190 L330 190 Z" fill="#c81719" filter="url(#b3)"/>
<path d="M378 263 L414 263 L418 270 L400 278 L380 274 Z" fill="#d0241a" filter="url(#b2)"/>
<path d="M419 392 L392 364 L420 356 L452 346 L480 374 L480 450 L419 450 Z" fill="#1b40c9" filter="url(#b2)"/>
<path d="M392 352 L428 336 L452 352 L420 366 Z" fill="#2364d6" opacity="0.7" filter="url(#b3)"/>
<ellipse cx="377" cy="247" rx="10" ry="6" transform="rotate(-45 377 247)" fill="url(#oy)"/>
<ellipse cx="396" cy="228" rx="7" ry="3.5" transform="rotate(-45 396 228)" fill="url(#oy)"/>
<ellipse cx="360" cy="264" rx="8" ry="6" transform="rotate(-45 360 264)" fill="url(#oy)"/>
<path d="M231 282 L238 296 L243 305 Q246 311 254 312" fill="none" stroke="#e2641e" stroke-width="5" filter="url(#b1)"/>
<path d="M232 276 L244 275 L250 279 L238 286 Z" fill="#ee9a22" filter="url(#b2)"/>
<ellipse cx="243.5" cy="275.5" rx="6" ry="3.5" fill="url(#halo)"/>
<ellipse cx="246" cy="333.5" rx="10" ry="6" fill="url(#oy)"/>
<ellipse cx="334" cy="302" rx="7" ry="9" fill="url(#oy)" opacity="0.9"/>
<g filter="url(#b1)">
<ellipse cx="339" cy="317" rx="5.4" ry="13" fill="#ee8a22"/><ellipse cx="339" cy="317.5" rx="3.6" ry="11" fill="#d8dc28"/>
<ellipse cx="358" cy="320" rx="5.6" ry="17" fill="#ee9a22"/><ellipse cx="358" cy="320" rx="4" ry="15" fill="#c4e030"/>
<ellipse cx="320" cy="313" rx="6.5" ry="4.6" fill="#ee9a22"/><ellipse cx="321" cy="313" rx="4.2" ry="2.6" fill="#d8dc28"/><ellipse cx="323.5" cy="313" rx="2.4" ry="1.5" fill="#20c0d0"/>
<ellipse cx="339" cy="313" rx="5.6" ry="2.6" fill="#40d890"/><ellipse cx="358" cy="313" rx="5.6" ry="2.8" fill="#28c8c8"/><ellipse cx="376.8" cy="313" rx="5.6" ry="3" fill="#20b0e0"/>
<ellipse cx="338" cy="334" rx="6" ry="3" fill="#1e68e0"/><ellipse cx="358" cy="332.5" rx="5.6" ry="2.8" fill="#20a8e0"/><ellipse cx="376.8" cy="332.5" rx="5.6" ry="3" fill="#1e78e0"/>
<rect x="346.8" y="318" width="3.4" height="10" fill="#d0241a"/><rect x="365.6" y="318" width="3.2" height="9" fill="#e05a20"/><rect x="365.8" y="303" width="3" height="5.6" fill="#d83a1c"/>
</g>
<path d="M426 251 L426 238 Q430 224 443 222 Q458 222 466 232 Q476 236 476 251 Z" fill="#ec9a20" filter="url(#b1)"/>
<path d="M429 251 L430 240 Q434 227 443 225 Q456 225 463 235 Q472 239 472 251 Z" fill="#e6da22" filter="url(#b1)"/>
<circle cx="449.5" cy="249" r="16" fill="url(#blob)"/>
<ellipse cx="396" cy="268" rx="12" ry="5" fill="url(#halo2)" opacity="0.8"/>
<rect x="612" y="215" width="31" height="27" fill="#1f9ae2"/>
<g filter="url(#b2)">
<rect x="628" y="214" width="16" height="29" fill="#20ccA0"/>
<rect x="611" y="214" width="9" height="6" fill="#40d060"/>
<path d="M598 260 L606 242 L614 242 L612 260 Z" fill="#ee8a22"/>
<path d="M606 260 L614 242 L622 242 L616 260 Z" fill="#e8dc22"/>
<path d="M614 260 L622 242 L631 242 L626 260 Z" fill="#40d860"/>
<path d="M625 260 L631 242 L638 242 L634 260 Z" fill="#20b8e0"/>
<path d="M633 260 L638 242 L646 242 L646 260 Z" fill="#1c50d8"/>
</g>
<rect x="581" y="220.5" width="31.5" height="21" fill="#3a36c4"/>
<rect x="606" y="224" width="9" height="17" fill="#2a60d4" filter="url(#b2)"/>
<circle cx="612" cy="223.5" r="2.1" fill="url(#hot)"/>
<circle cx="625" cy="223" r="2.1" fill="url(#hot)"/>
<circle cx="612" cy="231" r="2.1" fill="url(#hot)"/>
<circle cx="625" cy="231" r="2.1" fill="url(#hot)"/>
<circle cx="619" cy="234.2" r="3.3" fill="url(#hot)"/>
</g>
<path d="M641.5 220.8 L694 220.8 L699.5 226.6 L710 228.3 L712 231 L708 235 L702 241.4 L641.5 241.4 Z" fill="#27cc6e"/>
<clipPath id="tip"><path d="M641.5 220.8 L694 220.8 L699.5 226.6 L710 228.3 L712 231 L708 235 L702 241.4 L641.5 241.4 Z"/></clipPath>
<g clip-path="url(#tip)"><rect x="640" y="219" width="6" height="24" fill="#20ccA0" filter="url(#b2)"/><path d="M700 219 L714 219 L714 243 L696 243 L703 236 Z" fill="#1e90e0" filter="url(#b2)"/><path d="M692 219 L701 219 L703 231 L697 243 L690 243 L694 231 Z" fill="#20c8b0" filter="url(#b2)" opacity="0.9"/><circle cx="696.5" cy="231" r="3.4" fill="url(#hot)"/></g>
<circle cx="7" cy="82.7" r="4.5" fill="#4e4e4e"/>
<circle cx="23.5" cy="86" r="4.5" fill="#4e4e4e"/>
<circle cx="7" cy="98.7" r="4.5" fill="#4e4e4e"/>
<circle cx="7" cy="114.5" r="4.5" fill="#4e4e4e"/>
<circle cx="29.4" cy="114.5" r="4.5" fill="#4e4e4e"/>
<circle cx="7" cy="122.7" r="4.5" fill="#4e4e4e"/>
<circle cx="62.4" cy="104.4" r="4.5" fill="#4e4e4e"/>
<circle cx="83.5" cy="86" r="4.5" fill="#4e4e4e"/>
<circle cx="93" cy="105" r="4.5" fill="#4e4e4e"/>
<circle cx="102" cy="86" r="4.5" fill="#4e4e4e"/>
<circle cx="121" cy="86" r="4.5" fill="#4e4e4e"/>
<circle cx="140" cy="105" r="4.5" fill="#4e4e4e"/>
<circle cx="121" cy="122.7" r="4.5" fill="#4e4e4e"/>
<circle cx="140" cy="122.7" r="4.5" fill="#4e4e4e"/>
<circle cx="159" cy="86" r="4.5" fill="#4e4e4e"/>
<circle cx="159" cy="124" r="4.5" fill="#4e4e4e"/>
<circle cx="177.6" cy="105" r="4.5" fill="#4e4e4e"/>
<circle cx="197" cy="105" r="4.5" fill="#4e4e4e"/>
<circle cx="197" cy="122.7" r="4.5" fill="#4e4e4e"/>
<circle cx="216" cy="86" r="4.5" fill="#4e4e4e"/>
<circle cx="216" cy="122.7" r="4.5" fill="#4e4e4e"/>
<circle cx="229.4" cy="91" r="4.5" fill="#4e4e4e"/>
<circle cx="235" cy="105" r="4.5" fill="#4e4e4e"/>
<circle cx="235" cy="124" r="4.5" fill="#4e4e4e"/>
<circle cx="123" cy="135.6" r="4.5" fill="#4e4e4e"/>
<circle cx="123" cy="151.6" r="4.5" fill="#4e4e4e"/>
<circle cx="178" cy="142.7" r="4.5" fill="#4e4e4e"/>
<circle cx="14" cy="146.7" r="4.5" fill="#4e4e4e"/>
<circle cx="22.8" cy="146.7" r="4.5" fill="#4e4e4e"/>
<circle cx="31.3" cy="143.9" r="4.5" fill="#4e4e4e"/>
<circle cx="40" cy="146.7" r="4.5" fill="#4e4e4e"/>
<circle cx="35.3" cy="156.8" r="4.5" fill="#4e4e4e"/>
<circle cx="107" cy="166" r="4.5" fill="#4e4e4e"/>
<circle cx="123" cy="166" r="4.5" fill="#4e4e4e"/>
<circle cx="140.5" cy="161.5" r="4.5" fill="#4e4e4e"/>
<circle cx="159.3" cy="161.5" r="4.5" fill="#4e4e4e"/>
<circle cx="197" cy="161.5" r="4.5" fill="#4e4e4e"/>
<circle cx="198.8" cy="151.6" r="4.5" fill="#4e4e4e"/>
<circle cx="213.6" cy="151.6" r="4.5" fill="#4e4e4e"/>
<circle cx="235" cy="142.7" r="4.5" fill="#4e4e4e"/>
<circle cx="235" cy="161.5" r="4.5" fill="#4e4e4e"/>
<circle cx="27" cy="180.8" r="4.5" fill="#4e4e4e"/>
<circle cx="41" cy="180.8" r="4.5" fill="#4e4e4e"/>
<circle cx="178" cy="180.8" r="4.5" fill="#4e4e4e"/>
<circle cx="216" cy="180.8" r="4.5" fill="#4e4e4e"/>
<circle cx="27" cy="199.6" r="4.5" fill="#4e4e4e"/>
<circle cx="41" cy="219" r="4.5" fill="#4e4e4e"/>
<circle cx="27" cy="237.8" r="4.5" fill="#4e4e4e"/>
<circle cx="41" cy="256.6" r="4.5" fill="#4e4e4e"/>
<circle cx="27" cy="275.4" r="4.5" fill="#4e4e4e"/>
<circle cx="107" cy="195" r="4.5" fill="#4e4e4e"/>
<circle cx="123" cy="196.8" r="4.5" fill="#4e4e4e"/>
<circle cx="138.8" cy="212" r="4.5" fill="#4e4e4e"/>
<circle cx="159.3" cy="199.6" r="4.5" fill="#4e4e4e"/>
<circle cx="197" cy="199.6" r="4.5" fill="#4e4e4e"/>
<circle cx="198.8" cy="212" r="4.5" fill="#4e4e4e"/>
<circle cx="178" cy="219" r="4.5" fill="#4e4e4e"/>
<circle cx="216" cy="219" r="4.5" fill="#4e4e4e"/>
<circle cx="107" cy="227.9" r="4.5" fill="#4e4e4e"/>
<circle cx="121" cy="237.8" r="4.5" fill="#4e4e4e"/>
<circle cx="159.3" cy="237.8" r="4.5" fill="#4e4e4e"/>
<circle cx="107" cy="256.6" r="4.5" fill="#4e4e4e"/>
<circle cx="140" cy="256.6" r="4.5" fill="#4e4e4e"/>
<circle cx="178" cy="256.6" r="4.5" fill="#4e4e4e"/>
<circle cx="214" cy="257.3" r="4.5" fill="#4e4e4e"/>
<circle cx="235" cy="256.6" r="4.5" fill="#4e4e4e"/>
<circle cx="235" cy="199.6" r="4.5" fill="#4e4e4e"/>
<circle cx="121" cy="275" r="4.5" fill="#4e4e4e"/>
<circle cx="159.3" cy="275.4" r="4.5" fill="#4e4e4e"/>
<circle cx="178" cy="275.4" r="4.5" fill="#4e4e4e"/>
<circle cx="198.8" cy="272.6" r="4.5" fill="#4e4e4e"/>
<circle cx="216" cy="275.4" r="4.5" fill="#4e4e4e"/>
<circle cx="107" cy="289" r="4.5" fill="#4e4e4e"/>
<g clip-path="url(#cu)">
<ellipse cx="36" cy="293.6" rx="3.4" ry="2.6" fill="url(#halo)"/><ellipse cx="46" cy="293.6" rx="3.4" ry="2.6" fill="url(#halo)"/>
<ellipse cx="135" cy="293.6" rx="3.4" ry="2.6" fill="url(#halo)"/><ellipse cx="145" cy="293.6" rx="3.4" ry="2.6" fill="url(#halo)"/>
<ellipse cx="173" cy="293.6" rx="3.4" ry="2.6" fill="url(#halo)"/><ellipse cx="183" cy="293.6" rx="3.4" ry="2.6" fill="url(#halo)"/>
<ellipse cx="210.9" cy="294.4" rx="3.4" ry="2.6" fill="url(#halo)"/><ellipse cx="220.9" cy="294.4" rx="3.4" ry="2.6" fill="url(#halo)"/>
<ellipse cx="210.9" cy="332.3" rx="3.4" ry="2.6" fill="url(#halo)"/><ellipse cx="220.9" cy="332.3" rx="3.4" ry="2.6" fill="url(#halo)"/>
<ellipse cx="21.5" cy="313.4" rx="3.4" ry="2.6" fill="url(#halo)"/><ellipse cx="31.5" cy="313.4" rx="3.4" ry="2.6" fill="url(#halo)"/>
<ellipse cx="116.5" cy="313.4" rx="3.4" ry="2.6" fill="url(#halo)"/><ellipse cx="126.5" cy="313.4" rx="3.4" ry="2.6" fill="url(#halo)"/>
<ellipse cx="154" cy="313.4" rx="3.4" ry="2.6" fill="url(#halo)"/><ellipse cx="164" cy="313.4" rx="3.4" ry="2.6" fill="url(#halo)"/>
<ellipse cx="191" cy="313.4" rx="3.4" ry="2.6" fill="url(#halo)"/><ellipse cx="201" cy="313.4" rx="3.4" ry="2.6" fill="url(#halo)"/>
<ellipse cx="36" cy="332.3" rx="3.4" ry="2.6" fill="url(#halo)"/><ellipse cx="46" cy="332.3" rx="3.4" ry="2.6" fill="url(#halo)"/>
<ellipse cx="102" cy="332.3" rx="3.4" ry="2.6" fill="url(#halo)"/><ellipse cx="112" cy="332.3" rx="3.4" ry="2.6" fill="url(#halo)"/>
<ellipse cx="135" cy="332.3" rx="3.4" ry="2.6" fill="url(#halo)"/><ellipse cx="145" cy="332.3" rx="3.4" ry="2.6" fill="url(#halo)"/>
<ellipse cx="173" cy="332.3" rx="3.4" ry="2.6" fill="url(#halo)"/><ellipse cx="183" cy="332.3" rx="3.4" ry="2.6" fill="url(#halo)"/>
<ellipse cx="268" cy="275.5" rx="3.4" ry="2.6" fill="url(#halo)"/><ellipse cx="278" cy="275.5" rx="3.4" ry="2.6" fill="url(#halo)"/>
<ellipse cx="305.5" cy="275.5" rx="3.4" ry="2.6" fill="url(#halo)"/><ellipse cx="315.5" cy="275.5" rx="3.4" ry="2.6" fill="url(#halo)"/>
<ellipse cx="351.90000000000003" cy="271.9" rx="2.6" ry="2.6" fill="url(#halo)"/><ellipse cx="344.7" cy="279.1" rx="2.6" ry="2.6" fill="url(#halo)"/>
<ellipse cx="249" cy="294" rx="3.4" ry="2.6" fill="url(#halo)"/><ellipse cx="259" cy="294" rx="3.4" ry="2.6" fill="url(#halo)"/>
<ellipse cx="286.5" cy="294" rx="3.4" ry="2.6" fill="url(#halo)"/><ellipse cx="296.5" cy="294" rx="3.4" ry="2.6" fill="url(#halo)"/>
<ellipse cx="324.7" cy="294" rx="3.4" ry="2.6" fill="url(#halo)"/><ellipse cx="334.7" cy="294" rx="3.4" ry="2.6" fill="url(#halo)"/>
<ellipse cx="229.8" cy="313" rx="3.4" ry="2.6" fill="url(#halo)"/><ellipse cx="239.8" cy="313" rx="3.4" ry="2.6" fill="url(#halo)"/>
<ellipse cx="268" cy="313" rx="3.4" ry="2.6" fill="url(#halo)"/><ellipse cx="278" cy="313" rx="3.4" ry="2.6" fill="url(#halo)"/>
<ellipse cx="305.5" cy="313" rx="3.4" ry="2.6" fill="url(#halo)"/><ellipse cx="315.5" cy="313" rx="3.4" ry="2.6" fill="url(#halo)"/>
<ellipse cx="370.6" cy="253.4" rx="2.6" ry="2.6" fill="url(#halo)"/><ellipse cx="363.4" cy="260.6" rx="2.6" ry="2.6" fill="url(#halo)"/>
<ellipse cx="390.3" cy="233.9" rx="2.6" ry="2.6" fill="url(#halo)"/><ellipse cx="383.09999999999997" cy="241.1" rx="2.6" ry="2.6" fill="url(#halo)"/>
<ellipse cx="408.90000000000003" cy="214.4" rx="2.6" ry="2.6" fill="url(#halo)"/><ellipse cx="401.7" cy="221.6" rx="2.6" ry="2.6" fill="url(#halo)"/>
<ellipse cx="400.3" cy="257" rx="3.4" ry="2.6" fill="url(#halo)"/><ellipse cx="410.3" cy="257" rx="3.4" ry="2.6" fill="url(#halo)"/>
<ellipse cx="419.3" cy="257" rx="3.4" ry="2.6" fill="url(#halo)"/><ellipse cx="429.3" cy="257" rx="3.4" ry="2.6" fill="url(#halo)"/>
<ellipse cx="381.4" cy="275.5" rx="3.4" ry="2.6" fill="url(#halo)"/><ellipse cx="391.4" cy="275.5" rx="3.4" ry="2.6" fill="url(#halo)"/>
<ellipse cx="400.3" cy="275.5" rx="3.4" ry="2.6" fill="url(#halo)"/><ellipse cx="410.3" cy="275.5" rx="3.4" ry="2.6" fill="url(#halo)"/>
<ellipse cx="326" cy="294" rx="3.4" ry="2.6" fill="url(#halo)"/><ellipse cx="336" cy="294" rx="3.4" ry="2.6" fill="url(#halo)"/>
<ellipse cx="424.3" cy="194.6" rx="2" ry="2.6" fill="url(#halo2)"/><ellipse cx="424.3" cy="204.6" rx="2" ry="2.6" fill="url(#halo2)"/>
<ellipse cx="461.9" cy="194.6" rx="2" ry="2.6" fill="url(#halo2)"/><ellipse cx="461.9" cy="204.6" rx="2" ry="2.6" fill="url(#halo2)"/>
<ellipse cx="443" cy="213" rx="2" ry="2.6" fill="url(#halo2)"/><ellipse cx="443" cy="223" rx="2" ry="2.6" fill="url(#halo2)"/>
<ellipse cx="477.4" cy="215.20000000000002" rx="2.4" ry="2.4" fill="url(#halo2)"/><ellipse cx="484.6" cy="222.4" rx="2.4" ry="2.4" fill="url(#halo2)"/>
<ellipse cx="443" cy="177" rx="2" ry="2.6" fill="url(#halo2)"/><ellipse cx="443" cy="187" rx="2" ry="2.6" fill="url(#halo2)"/>
<ellipse cx="461.9" cy="81.2" rx="2" ry="2.6" fill="url(#halo2)"/><ellipse cx="461.9" cy="91.2" rx="2" ry="2.6" fill="url(#halo2)"/>
<ellipse cx="442.8" cy="100" rx="2" ry="2.6" fill="url(#halo2)"/><ellipse cx="442.8" cy="110" rx="2" ry="2.6" fill="url(#halo2)"/>
<ellipse cx="461.9" cy="100" rx="2" ry="2.6" fill="url(#halo2)"/><ellipse cx="461.9" cy="110" rx="2" ry="2.6" fill="url(#halo2)"/>
<ellipse cx="424" cy="156.5" rx="2" ry="2.6" fill="url(#halo2)"/><ellipse cx="424" cy="166.5" rx="2" ry="2.6" fill="url(#halo2)"/>
<ellipse cx="461.9" cy="156.5" rx="2" ry="2.6" fill="url(#halo2)"/><ellipse cx="461.9" cy="166.5" rx="2" ry="2.6" fill="url(#halo2)"/>
<ellipse cx="442.8" cy="175.4" rx="2" ry="2.6" fill="url(#halo2)"/><ellipse cx="442.8" cy="185.4" rx="2" ry="2.6" fill="url(#halo2)"/>
<ellipse cx="514" cy="217.6" rx="3.4" ry="2.6" fill="url(#halo)"/><ellipse cx="524" cy="217.6" rx="3.4" ry="2.6" fill="url(#halo)"/>
<ellipse cx="551.6" cy="217.6" rx="3.4" ry="2.6" fill="url(#halo)"/><ellipse cx="561.6" cy="217.6" rx="3.4" ry="2.6" fill="url(#halo)"/>
<ellipse cx="494.8" cy="237.6" rx="3.4" ry="2.6" fill="url(#halo)"/><ellipse cx="504.8" cy="237.6" rx="3.4" ry="2.6" fill="url(#halo)"/>
<ellipse cx="532.5" cy="237.6" rx="3.4" ry="2.6" fill="url(#halo)"/><ellipse cx="542.5" cy="237.6" rx="3.4" ry="2.6" fill="url(#halo)"/>
<ellipse cx="570.4" cy="237.6" rx="3.4" ry="2.6" fill="url(#halo)"/><ellipse cx="580.4" cy="237.6" rx="3.4" ry="2.6" fill="url(#halo)"/>
<ellipse cx="514" cy="256.2" rx="3.4" ry="2.6" fill="url(#halo)"/><ellipse cx="524" cy="256.2" rx="3.4" ry="2.6" fill="url(#halo)"/>
<ellipse cx="551.6" cy="256.2" rx="3.4" ry="2.6" fill="url(#halo)"/><ellipse cx="561.6" cy="256.2" rx="3.4" ry="2.6" fill="url(#halo)"/>
<ellipse cx="589.7" cy="256.4" rx="3.4" ry="2.6" fill="url(#halo)"/><ellipse cx="599.7" cy="256.4" rx="3.4" ry="2.6" fill="url(#halo)"/>
</g>
<circle cx="41" cy="293.6" r="4.4" fill="#4e4e4e"/>
<circle cx="140" cy="293.6" r="4.4" fill="#4e4e4e"/>
<circle cx="178" cy="293.6" r="4.4" fill="#4e4e4e"/>
<circle cx="215.9" cy="294.4" r="4.4" fill="#4e4e4e"/>
<circle cx="215.9" cy="332.3" r="4.4" fill="#4e4e4e"/>
<circle cx="26.5" cy="313.4" r="4.4" fill="#4e4e4e"/>
<circle cx="121.5" cy="313.4" r="4.4" fill="#4e4e4e"/>
<circle cx="159" cy="313.4" r="4.4" fill="#4e4e4e"/>
<circle cx="196" cy="313.4" r="4.4" fill="#4e4e4e"/>
<circle cx="41" cy="332.3" r="4.4" fill="#4e4e4e"/>
<circle cx="107" cy="332.3" r="4.4" fill="#4e4e4e"/>
<circle cx="140" cy="332.3" r="4.4" fill="#4e4e4e"/>
<circle cx="178" cy="332.3" r="4.4" fill="#4e4e4e"/>
<circle cx="273" cy="275.5" r="4.4" fill="#4e4e4e"/>
<circle cx="310.5" cy="275.5" r="4.4" fill="#4e4e4e"/>
<circle cx="348.3" cy="275.5" r="4.4" fill="#4e4e4e"/>
<circle cx="254" cy="294" r="4.4" fill="#4e4e4e"/>
<circle cx="291.5" cy="294" r="4.4" fill="#4e4e4e"/>
<circle cx="329.7" cy="294" r="4.4" fill="#4e4e4e"/>
<circle cx="234.8" cy="313" r="4.4" fill="#4e4e4e"/>
<circle cx="273" cy="313" r="4.4" fill="#4e4e4e"/>
<circle cx="310.5" cy="313" r="4.4" fill="#4e4e4e"/>
<circle cx="329.7" cy="313" r="4.4" fill="#4e4e4e"/>
<circle cx="348.6" cy="313" r="4.4" fill="#4e4e4e"/>
<circle cx="367.2" cy="313" r="4.4" fill="#4e4e4e"/>
<circle cx="386.4" cy="313" r="4.4" fill="#4e4e4e"/>
<circle cx="405.3" cy="313" r="4.4" fill="#4e4e4e"/>
<circle cx="424.3" cy="313" r="4.4" fill="#4e4e4e"/>
<circle cx="329.7" cy="332.3" r="4.4" fill="#4e4e4e"/>
<circle cx="348.6" cy="332.3" r="4.4" fill="#4e4e4e"/>
<circle cx="367.2" cy="332.3" r="4.4" fill="#4e4e4e"/>
<circle cx="386.4" cy="332.3" r="4.4" fill="#4e4e4e"/>
<circle cx="405.3" cy="332.3" r="4.4" fill="#4e4e4e"/>
<circle cx="367" cy="257" r="4.4" fill="#4e4e4e"/>
<circle cx="386.7" cy="237.5" r="4.4" fill="#4e4e4e"/>
<circle cx="405.3" cy="218" r="4.4" fill="#4e4e4e"/>
<circle cx="405.3" cy="257" r="4.4" fill="#4e4e4e"/>
<circle cx="424.3" cy="257" r="4.4" fill="#4e4e4e"/>
<circle cx="386.4" cy="275.5" r="4.4" fill="#4e4e4e"/>
<circle cx="405.3" cy="275.5" r="4.4" fill="#4e4e4e"/>
<circle cx="331" cy="294" r="4.4" fill="#4e4e4e"/>
<circle cx="424.3" cy="199.6" r="4.4" fill="#4e4e4e"/>
<circle cx="461.9" cy="199.6" r="4.4" fill="#4e4e4e"/>
<circle cx="443" cy="218" r="4.4" fill="#4e4e4e"/>
<circle cx="481" cy="218.8" r="4.4" fill="#4e4e4e"/>
<circle cx="424.3" cy="237" r="4.4" fill="#4e4e4e"/>
<circle cx="461.9" cy="237" r="4.4" fill="#4e4e4e"/>
<circle cx="443" cy="182" r="4.4" fill="#4e4e4e"/>
<circle cx="461.9" cy="86.2" r="4.4" fill="#4e4e4e"/>
<circle cx="442.8" cy="105" r="4.4" fill="#4e4e4e"/>
<circle cx="461.9" cy="105" r="4.4" fill="#4e4e4e"/>
<circle cx="424" cy="161.5" r="4.4" fill="#4e4e4e"/>
<circle cx="461.9" cy="161.5" r="4.4" fill="#4e4e4e"/>
<circle cx="442.8" cy="180.4" r="4.4" fill="#4e4e4e"/>
<circle cx="478.8" cy="105" r="4.4" fill="#4e4e4e"/>
<circle cx="478.8" cy="142.7" r="4.4" fill="#4e4e4e"/>
<circle cx="478.8" cy="180.4" r="4.4" fill="#4e4e4e"/>
<circle cx="519" cy="217.6" r="4.4" fill="#4e4e4e"/>
<circle cx="556.6" cy="217.6" r="4.4" fill="#4e4e4e"/>
<circle cx="499.8" cy="237.6" r="4.4" fill="#4e4e4e"/>
<circle cx="537.5" cy="237.6" r="4.4" fill="#4e4e4e"/>
<circle cx="575.4" cy="237.6" r="4.4" fill="#4e4e4e"/>
<circle cx="519" cy="256.2" r="4.4" fill="#4e4e4e"/>
<circle cx="556.6" cy="256.2" r="4.4" fill="#4e4e4e"/>
<circle cx="594.7" cy="256.4" r="4.4" fill="#4e4e4e"/>
<circle cx="632" cy="257" r="4.4" fill="#4e4e4e"/>
<circle cx="478" cy="255.5" r="4.4" fill="#4e4e4e"/>
<circle cx="386" cy="350.7" r="4.4" fill="#4e4e4e"/>
<circle cx="424.5" cy="350.7" r="4.4" fill="#4e4e4e"/>
<circle cx="405" cy="370" r="4.4" fill="#4e4e4e"/>
<circle cx="443" cy="370" r="4.4" fill="#4e4e4e"/>
<circle cx="424.5" cy="388.7" r="4.4" fill="#4e4e4e"/>
<circle cx="462" cy="388.7" r="4.4" fill="#4e4e4e"/>
<circle cx="443" cy="408" r="4.4" fill="#4e4e4e"/>
<circle cx="478.6" cy="408" r="4.4" fill="#4e4e4e"/>
<circle cx="424.5" cy="426.6" r="4.4" fill="#4e4e4e"/>
<circle cx="462" cy="426.6" r="4.4" fill="#4e4e4e"/>
<circle cx="107" cy="289.5" r="4.4" fill="#4e4e4e"/>
<circle cx="292" cy="370" r="37.8" fill="url(#lav)" stroke="#0e4520" stroke-width="9.4"/>
<path d="M515 450 L515 347 A19 19 0 0 1 534 328 L693.4 328 A19 19 0 0 1 712.4 347 L712.4 450" fill="url(#lav)" stroke="#0e4520" stroke-width="9.5"/>
<path d="M798 70 L798 134 A9 9 0 0 1 794 142 A9 9 0 0 0 789 150 L789 209 A9 9 0 0 0 794 217 A9 9 0 0 1 798 225 L798 331 L784 331 L780 344 L780 455 L870 455 L870 70 Z" fill="url(#lav)"/>
<g clip-path="url(#rr)"><rect x="784" y="135" width="70" height="195" fill="url(#dth)" mask="url(#dm)"/></g>
<path d="M798 70 L798 134 A9 9 0 0 1 794 142 A9 9 0 0 0 789 150 L789 209 A9 9 0 0 0 794 217 A9 9 0 0 1 798 225 L798 300" fill="none" stroke="#0e4520" stroke-width="9.4"/>
<path d="M793.3 299 L793.3 318 Q793.3 327 786 329.4 Q775.3 333 775.3 346 L775.3 455 L784.5 455 L784.5 347 Q784.5 331.6 798 330.6 L802.7 330.6 L802.7 299 Z" fill="#0e4520"/>
<path d="M227.4 338 L227.4 446" stroke="#8c8c8c" stroke-width="0.8"/>
<g fill="#1f5d40">
<path d="M-8.9 348.7 l1.7 1 l-1.7 1 z"/>
<path d="M-8.9 386.3 l1.7 1 l-1.7 1 z"/>
<path d="M-8.9 424.0 l1.7 1 l-1.7 1 z"/>
<path d="M9.9 367.5 l1.7 1 l-1.7 1 z"/>
<path d="M9.9 405.1 l1.7 1 l-1.7 1 z"/>
<path d="M9.9 442.8 l1.7 1 l-1.7 1 z"/>
<path d="M28.7 386.3 l1.7 1 l-1.7 1 z"/>
<path d="M28.7 424.0 l1.7 1 l-1.7 1 z"/>
<path d="M47.5 367.5 l1.7 1 l-1.7 1 z"/>
<path d="M47.5 405.1 l1.7 1 l-1.7 1 z"/>
<path d="M66.3 348.7 l1.7 1 l-1.7 1 z"/>
<path d="M66.3 386.3 l1.7 1 l-1.7 1 z"/>
<path d="M66.3 424.0 l1.7 1 l-1.7 1 z"/>
<path d="M85.2 367.5 l1.7 1 l-1.7 1 z"/>
<path d="M85.2 442.8 l1.7 1 l-1.7 1 z"/>
<path d="M104.0 348.7 l1.7 1 l-1.7 1 z"/>
<path d="M104.0 386.3 l1.7 1 l-1.7 1 z"/>
<path d="M104.0 424.0 l1.7 1 l-1.7 1 z"/>
<path d="M122.8 367.5 l1.7 1 l-1.7 1 z"/>
<path d="M122.8 405.1 l1.7 1 l-1.7 1 z"/>
<path d="M122.8 442.8 l1.7 1 l-1.7 1 z"/>
<path d="M141.6 348.7 l1.7 1 l-1.7 1 z"/>
<path d="M141.6 386.3 l1.7 1 l-1.7 1 z"/>
<path d="M160.4 367.5 l1.7 1 l-1.7 1 z"/>
<path d="M160.4 405.1 l1.7 1 l-1.7 1 z"/>
<path d="M160.4 442.8 l1.7 1 l-1.7 1 z"/>
<path d="M179.3 348.7 l1.7 1 l-1.7 1 z"/>
<path d="M179.3 386.3 l1.7 1 l-1.7 1 z"/>
<path d="M179.3 424.0 l1.7 1 l-1.7 1 z"/>
<path d="M198.1 367.5 l1.7 1 l-1.7 1 z"/>
<path d="M198.1 405.1 l1.7 1 l-1.7 1 z"/>
<path d="M198.1 442.8 l1.7 1 l-1.7 1 z"/>
<path d="M216.9 348.7 l1.7 1 l-1.7 1 z"/>
<path d="M216.9 386.3 l1.7 1 l-1.7 1 z"/>
<path d="M216.9 424.0 l1.7 1 l-1.7 1 z"/>
<path d="M235.7 367.5 l1.7 1 l-1.7 1 z"/>
<path d="M235.7 405.1 l1.7 1 l-1.7 1 z"/>
<path d="M235.7 442.8 l1.7 1 l-1.7 1 z"/>
<path d="M254.5 85.2 l1.7 1 l-1.7 1 z"/>
<path d="M254.5 122.8 l1.7 1 l-1.7 1 z"/>
<path d="M254.5 160.5 l1.7 1 l-1.7 1 z"/>
<path d="M254.5 235.8 l1.7 1 l-1.7 1 z"/>
<path d="M254.5 273.4 l1.7 1 l-1.7 1 z"/>
<path d="M273.4 104.0 l1.7 1 l-1.7 1 z"/>
<path d="M273.4 141.7 l1.7 1 l-1.7 1 z"/>
<path d="M273.4 179.3 l1.7 1 l-1.7 1 z"/>
<path d="M273.4 216.9 l1.7 1 l-1.7 1 z"/>
<path d="M273.4 254.6 l1.7 1 l-1.7 1 z"/>
<path d="M273.4 442.8 l1.7 1 l-1.7 1 z"/>
<path d="M292.2 85.2 l1.7 1 l-1.7 1 z"/>
<path d="M292.2 122.8 l1.7 1 l-1.7 1 z"/>
<path d="M292.2 198.1 l1.7 1 l-1.7 1 z"/>
<path d="M292.2 273.4 l1.7 1 l-1.7 1 z"/>
<path d="M292.2 424.0 l1.7 1 l-1.7 1 z"/>
<path d="M311.0 141.7 l1.7 1 l-1.7 1 z"/>
<path d="M311.0 179.3 l1.7 1 l-1.7 1 z"/>
<path d="M311.0 216.9 l1.7 1 l-1.7 1 z"/>
<path d="M329.8 85.2 l1.7 1 l-1.7 1 z"/>
<path d="M329.8 122.8 l1.7 1 l-1.7 1 z"/>
<path d="M329.8 160.5 l1.7 1 l-1.7 1 z"/>
<path d="M329.8 198.1 l1.7 1 l-1.7 1 z"/>
<path d="M329.8 235.8 l1.7 1 l-1.7 1 z"/>
<path d="M329.8 273.4 l1.7 1 l-1.7 1 z"/>
<path d="M329.8 424.0 l1.7 1 l-1.7 1 z"/>
<path d="M348.6 104.0 l1.7 1 l-1.7 1 z"/>
<path d="M348.6 141.7 l1.7 1 l-1.7 1 z"/>
<path d="M348.6 179.3 l1.7 1 l-1.7 1 z"/>
<path d="M348.6 254.6 l1.7 1 l-1.7 1 z"/>
<path d="M348.6 367.5 l1.7 1 l-1.7 1 z"/>
<path d="M348.6 405.1 l1.7 1 l-1.7 1 z"/>
<path d="M367.5 85.2 l1.7 1 l-1.7 1 z"/>
<path d="M367.5 160.5 l1.7 1 l-1.7 1 z"/>
<path d="M367.5 198.1 l1.7 1 l-1.7 1 z"/>
<path d="M367.5 235.8 l1.7 1 l-1.7 1 z"/>
<path d="M367.5 348.7 l1.7 1 l-1.7 1 z"/>
<path d="M367.5 386.3 l1.7 1 l-1.7 1 z"/>
<path d="M367.5 424.0 l1.7 1 l-1.7 1 z"/>
<path d="M386.3 104.0 l1.7 1 l-1.7 1 z"/>
<path d="M386.3 141.7 l1.7 1 l-1.7 1 z"/>
<path d="M386.3 179.3 l1.7 1 l-1.7 1 z"/>
<path d="M386.3 367.5 l1.7 1 l-1.7 1 z"/>
<path d="M386.3 405.1 l1.7 1 l-1.7 1 z"/>
<path d="M386.3 442.8 l1.7 1 l-1.7 1 z"/>
<path d="M405.1 85.2 l1.7 1 l-1.7 1 z"/>
<path d="M405.1 160.5 l1.7 1 l-1.7 1 z"/>
<path d="M405.1 198.1 l1.7 1 l-1.7 1 z"/>
<path d="M405.1 386.3 l1.7 1 l-1.7 1 z"/>
<path d="M405.1 424.0 l1.7 1 l-1.7 1 z"/>
<path d="M442.7 273.4 l1.7 1 l-1.7 1 z"/>
<path d="M442.7 311.0 l1.7 1 l-1.7 1 z"/>
<path d="M461.6 292.2 l1.7 1 l-1.7 1 z"/>
<path d="M480.4 85.2 l1.7 1 l-1.7 1 z"/>
<path d="M480.4 160.5 l1.7 1 l-1.7 1 z"/>
<path d="M480.4 273.4 l1.7 1 l-1.7 1 z"/>
<path d="M480.4 311.0 l1.7 1 l-1.7 1 z"/>
<path d="M480.4 348.7 l1.7 1 l-1.7 1 z"/>
<path d="M480.4 386.3 l1.7 1 l-1.7 1 z"/>
<path d="M480.4 424.0 l1.7 1 l-1.7 1 z"/>
<path d="M499.2 104.0 l1.7 1 l-1.7 1 z"/>
<path d="M499.2 122.8 l1.7 1 l-1.7 1 z"/>
<path d="M499.2 141.7 l1.7 1 l-1.7 1 z"/>
<path d="M499.2 179.3 l1.7 1 l-1.7 1 z"/>
<path d="M499.2 292.2 l1.7 1 l-1.7 1 z"/>
<path d="M499.2 329.9 l1.7 1 l-1.7 1 z"/>
<path d="M499.2 367.5 l1.7 1 l-1.7 1 z"/>
<path d="M499.2 405.1 l1.7 1 l-1.7 1 z"/>
<path d="M499.2 442.8 l1.7 1 l-1.7 1 z"/>
<path d="M518.0 85.2 l1.7 1 l-1.7 1 z"/>
<path d="M518.0 122.8 l1.7 1 l-1.7 1 z"/>
<path d="M518.0 141.7 l1.7 1 l-1.7 1 z"/>
<path d="M518.0 160.5 l1.7 1 l-1.7 1 z"/>
<path d="M518.0 179.3 l1.7 1 l-1.7 1 z"/>
<path d="M518.0 198.1 l1.7 1 l-1.7 1 z"/>
<path d="M518.0 273.4 l1.7 1 l-1.7 1 z"/>
<path d="M518.0 311.0 l1.7 1 l-1.7 1 z"/>
<path d="M536.8 104.0 l1.7 1 l-1.7 1 z"/>
<path d="M536.8 141.7 l1.7 1 l-1.7 1 z"/>
<path d="M536.8 160.5 l1.7 1 l-1.7 1 z"/>
<path d="M536.8 179.3 l1.7 1 l-1.7 1 z"/>
<path d="M536.8 292.2 l1.7 1 l-1.7 1 z"/>
<path d="M555.7 85.2 l1.7 1 l-1.7 1 z"/>
<path d="M555.7 122.8 l1.7 1 l-1.7 1 z"/>
<path d="M555.7 160.5 l1.7 1 l-1.7 1 z"/>
<path d="M555.7 179.3 l1.7 1 l-1.7 1 z"/>
<path d="M555.7 198.1 l1.7 1 l-1.7 1 z"/>
<path d="M555.7 273.4 l1.7 1 l-1.7 1 z"/>
<path d="M555.7 311.0 l1.7 1 l-1.7 1 z"/>
<path d="M574.5 104.0 l1.7 1 l-1.7 1 z"/>
<path d="M574.5 122.8 l1.7 1 l-1.7 1 z"/>
<path d="M574.5 141.7 l1.7 1 l-1.7 1 z"/>
<path d="M574.5 179.3 l1.7 1 l-1.7 1 z"/>
<path d="M574.5 292.2 l1.7 1 l-1.7 1 z"/>
<path d="M593.3 85.2 l1.7 1 l-1.7 1 z"/>
<path d="M593.3 122.8 l1.7 1 l-1.7 1 z"/>
<path d="M593.3 160.5 l1.7 1 l-1.7 1 z"/>
<path d="M593.3 198.1 l1.7 1 l-1.7 1 z"/>
<path d="M593.3 273.4 l1.7 1 l-1.7 1 z"/>
<path d="M593.3 311.0 l1.7 1 l-1.7 1 z"/>
<path d="M612.1 104.0 l1.7 1 l-1.7 1 z"/>
<path d="M612.1 141.7 l1.7 1 l-1.7 1 z"/>
<path d="M612.1 179.3 l1.7 1 l-1.7 1 z"/>
<path d="M612.1 292.2 l1.7 1 l-1.7 1 z"/>
<path d="M630.9 85.2 l1.7 1 l-1.7 1 z"/>
<path d="M630.9 104.0 l1.7 1 l-1.7 1 z"/>
<path d="M630.9 122.8 l1.7 1 l-1.7 1 z"/>
<path d="M630.9 160.5 l1.7 1 l-1.7 1 z"/>
<path d="M630.9 198.1 l1.7 1 l-1.7 1 z"/>
<path d="M630.9 273.4 l1.7 1 l-1.7 1 z"/>
<path d="M630.9 311.0 l1.7 1 l-1.7 1 z"/>
<path d="M649.8 104.0 l1.7 1 l-1.7 1 z"/>
<path d="M649.8 141.7 l1.7 1 l-1.7 1 z"/>
<path d="M649.8 160.5 l1.7 1 l-1.7 1 z"/>
<path d="M649.8 179.3 l1.7 1 l-1.7 1 z"/>
<path d="M649.8 292.2 l1.7 1 l-1.7 1 z"/>
<path d="M668.6 85.2 l1.7 1 l-1.7 1 z"/>
<path d="M668.6 122.8 l1.7 1 l-1.7 1 z"/>
<path d="M668.6 141.7 l1.7 1 l-1.7 1 z"/>
<path d="M668.6 160.5 l1.7 1 l-1.7 1 z"/>
<path d="M668.6 179.3 l1.7 1 l-1.7 1 z"/>
<path d="M668.6 198.1 l1.7 1 l-1.7 1 z"/>
<path d="M668.6 273.4 l1.7 1 l-1.7 1 z"/>
<path d="M668.6 311.0 l1.7 1 l-1.7 1 z"/>
<path d="M687.4 85.2 l1.7 1 l-1.7 1 z"/>
<path d="M687.4 104.0 l1.7 1 l-1.7 1 z"/>
<path d="M687.4 141.7 l1.7 1 l-1.7 1 z"/>
<path d="M687.4 160.5 l1.7 1 l-1.7 1 z"/>
<path d="M687.4 292.2 l1.7 1 l-1.7 1 z"/>
<path d="M706.2 85.2 l1.7 1 l-1.7 1 z"/>
<path d="M706.2 122.8 l1.7 1 l-1.7 1 z"/>
<path d="M706.2 160.5 l1.7 1 l-1.7 1 z"/>
<path d="M706.2 179.3 l1.7 1 l-1.7 1 z"/>
<path d="M706.2 198.1 l1.7 1 l-1.7 1 z"/>
<path d="M706.2 273.4 l1.7 1 l-1.7 1 z"/>
<path d="M706.2 311.0 l1.7 1 l-1.7 1 z"/>
<path d="M725.0 104.0 l1.7 1 l-1.7 1 z"/>
<path d="M725.0 141.7 l1.7 1 l-1.7 1 z"/>
<path d="M725.0 160.5 l1.7 1 l-1.7 1 z"/>
<path d="M725.0 179.3 l1.7 1 l-1.7 1 z"/>
<path d="M725.0 216.9 l1.7 1 l-1.7 1 z"/>
<path d="M725.0 254.6 l1.7 1 l-1.7 1 z"/>
<path d="M725.0 292.2 l1.7 1 l-1.7 1 z"/>
<path d="M725.0 329.9 l1.7 1 l-1.7 1 z"/>
<path d="M725.0 367.5 l1.7 1 l-1.7 1 z"/>
<path d="M725.0 405.1 l1.7 1 l-1.7 1 z"/>
<path d="M743.9 122.8 l1.7 1 l-1.7 1 z"/>
<path d="M743.9 141.7 l1.7 1 l-1.7 1 z"/>
<path d="M743.9 160.5 l1.7 1 l-1.7 1 z"/>
<path d="M743.9 179.3 l1.7 1 l-1.7 1 z"/>
<path d="M743.9 198.1 l1.7 1 l-1.7 1 z"/>
<path d="M743.9 235.8 l1.7 1 l-1.7 1 z"/>
<path d="M743.9 273.4 l1.7 1 l-1.7 1 z"/>
<path d="M743.9 311.0 l1.7 1 l-1.7 1 z"/>
<path d="M743.9 348.7 l1.7 1 l-1.7 1 z"/>
<path d="M743.9 386.3 l1.7 1 l-1.7 1 z"/>
<path d="M743.9 424.0 l1.7 1 l-1.7 1 z"/>
<path d="M762.7 85.2 l1.7 1 l-1.7 1 z"/>
<path d="M762.7 104.0 l1.7 1 l-1.7 1 z"/>
<path d="M762.7 122.8 l1.7 1 l-1.7 1 z"/>
<path d="M762.7 141.7 l1.7 1 l-1.7 1 z"/>
<path d="M762.7 160.5 l1.7 1 l-1.7 1 z"/>
<path d="M762.7 179.3 l1.7 1 l-1.7 1 z"/>
<path d="M762.7 216.9 l1.7 1 l-1.7 1 z"/>
<path d="M762.7 254.6 l1.7 1 l-1.7 1 z"/>
<path d="M762.7 292.2 l1.7 1 l-1.7 1 z"/>
<path d="M762.7 329.9 l1.7 1 l-1.7 1 z"/>
<path d="M762.7 367.5 l1.7 1 l-1.7 1 z"/>
<path d="M762.7 405.1 l1.7 1 l-1.7 1 z"/>
<rect x="383.3" y="129.2" width="1.4" height="1.6"/>
<rect x="390.3" y="129.2" width="1.4" height="1.6"/>
<rect x="383.3" y="136.2" width="1.4" height="1.6"/>
<rect x="390.3" y="136.2" width="1.4" height="1.6"/>
<rect x="383.3" y="143.7" width="1.4" height="1.6"/>
<rect x="390.3" y="143.7" width="1.4" height="1.6"/>
<rect x="383.3" y="151.2" width="1.4" height="1.6"/>
<rect x="390.3" y="151.2" width="1.4" height="1.6"/>
</g>
<g stroke="#2f3a33" stroke-width="0.9" fill="none">
<path d="M236 89 L244.5 89 L249 92 L257 92"/>
<path d="M236 97.5 L244.5 97.5 L249 100.5 L257 100.5"/>
<path d="M236 106 L244.5 106 L249 109 L257 109"/>
<path d="M236 114.6 L244.5 114.6 L249 117.6 L257 117.6"/>
<path d="M236 123 L244.5 123 L249 126 L257 126"/>
<path d="M236 130.4 L244.5 130.4 L249 133.4 L257 133.4"/>
<path d="M236 136.5 L244.5 136.5 L249 139.5 L257 139.5"/>
<path d="M236 143.9 L244.5 143.9 L249 146.9 L257 146.9"/>
<path d="M236 151 L244.5 151 L249 154 L257 154"/>
<path d="M270 86 L276 86 L279 88.5 L283 88.5"/>
<path d="M270 94 L276 94 L279 96.5 L283 96.5"/>
<path d="M270 102 L276 102 L279 104.5 L283 104.5"/>
<path d="M270 110 L276 110 L279 112.5 L283 112.5"/>
<path d="M270 118 L276 118 L279 120.5 L283 120.5"/>
<path d="M270 126 L276 126 L279 128.5 L283 128.5"/>
<path d="M270 134 L276 134 L279 136.5 L283 136.5"/>
<path d="M270 142 L276 142 L279 144.5 L283 144.5"/>
<path d="M270 150 L276 150 L279 152.5 L283 152.5"/>
<path d="M296 128 L296 156 M300 128 L300 156" stroke-width="0.7"/>
</g>
<g fill="#3d4641">
<rect x="255" y="95" width="4" height="6"/>
<rect x="269" y="95" width="4" height="6"/>
<rect x="280" y="95" width="4" height="6"/>
<rect x="294" y="95" width="4" height="6"/>
<rect x="255" y="111" width="4" height="6"/>
<rect x="269" y="111" width="4" height="6"/>
<rect x="280" y="111" width="4" height="6"/>
<rect x="294" y="111" width="4" height="6"/>
<rect x="255" y="127" width="4" height="6"/>
<rect x="269" y="127" width="4" height="6"/>
<rect x="280" y="127" width="4" height="6"/>
<rect x="294" y="127" width="4" height="6"/>
<rect x="255" y="143" width="4" height="6"/>
<rect x="269" y="143" width="4" height="6"/>
<rect x="280" y="143" width="4" height="6"/>
<rect x="294" y="143" width="4" height="6"/>
</g>
<text x="49" y="83.5" font-family="Liberation Sans, sans-serif" font-size="4.6" fill="#e8e8e8" text-anchor="middle" letter-spacing="-0.2">(L)</text>
<text x="74.5" y="83.5" font-family="Liberation Sans, sans-serif" font-size="4.6" fill="#e8e8e8" text-anchor="middle" letter-spacing="-0.2">(L)</text>
<text x="49" y="93.5" font-family="Liberation Sans, sans-serif" font-size="4.6" fill="#e8e8e8" text-anchor="middle" letter-spacing="-0.2">R52</text>
<text x="49" y="100.5" font-family="Liberation Sans, sans-serif" font-size="4.6" fill="#e8e8e8" text-anchor="middle" letter-spacing="-0.2">(L)</text>
<text x="74.5" y="93.5" font-family="Liberation Sans, sans-serif" font-size="4.6" fill="#e8e8e8" text-anchor="middle" letter-spacing="-0.2">R50</text>
<text x="74.5" y="100.5" font-family="Liberation Sans, sans-serif" font-size="4.6" fill="#e8e8e8" text-anchor="middle" letter-spacing="-0.2">(L)</text>
<text x="49" y="109.5" font-family="Liberation Sans, sans-serif" font-size="4.6" fill="#e8e8e8" text-anchor="middle" letter-spacing="-0.2">R72</text>
<text x="49" y="116.5" font-family="Liberation Sans, sans-serif" font-size="4.6" fill="#e8e8e8" text-anchor="middle" letter-spacing="-0.2">(L)</text>
<text x="74.5" y="109.5" font-family="Liberation Sans, sans-serif" font-size="4.6" fill="#e8e8e8" text-anchor="middle" letter-spacing="-0.2">R70</text>
<text x="74.5" y="116.5" font-family="Liberation Sans, sans-serif" font-size="4.6" fill="#e8e8e8" text-anchor="middle" letter-spacing="-0.2">(L)</text>
<text x="49" y="125" font-family="Liberation Sans, sans-serif" font-size="4.6" fill="#e8e8e8" text-anchor="middle" letter-spacing="-0.2">R71</text>
<text x="49" y="132.5" font-family="Liberation Sans, sans-serif" font-size="4.6" fill="#e8e8e8" text-anchor="middle" letter-spacing="-0.2">(L)</text>
<text x="74.5" y="125" font-family="Liberation Sans, sans-serif" font-size="4.6" fill="#e8e8e8" text-anchor="middle" letter-spacing="-0.2">R74</text>
<text x="74.5" y="132.5" font-family="Liberation Sans, sans-serif" font-size="4.6" fill="#e8e8e8" text-anchor="middle" letter-spacing="-0.2">(L)</text>
<text x="63" y="140.5" font-family="Liberation Sans, sans-serif" font-size="4.6" fill="#e8e8e8" text-anchor="middle" letter-spacing="-0.2">R61</text>
<text x="63" y="147.5" font-family="Liberation Sans, sans-serif" font-size="4.6" fill="#e8e8e8" text-anchor="middle" letter-spacing="-0.2">(L)</text>
<text x="63" y="152" font-family="Liberation Sans, sans-serif" font-size="4.6" fill="#e8e8e8" text-anchor="middle" letter-spacing="-0.2">R60</text>
<text x="63" y="159.5" font-family="Liberation Sans, sans-serif" font-size="4.6" fill="#e8e8e8" text-anchor="middle" letter-spacing="-0.2">(L)</text>
<text x="79" y="146.5" font-family="Liberation Sans, sans-serif" font-size="4.6" fill="#e8e8e8" text-anchor="middle" letter-spacing="-0.2">R57</text>
<text x="79" y="153.5" font-family="Liberation Sans, sans-serif" font-size="4.6" fill="#e8e8e8" text-anchor="middle" letter-spacing="-0.2">(L)</text>
<text x="168" y="167.5" font-family="Liberation Sans, sans-serif" font-size="4.6" fill="#e8e8e8" text-anchor="middle" letter-spacing="-0.2">U5</text>
<text x="168" y="175" font-family="Liberation Sans, sans-serif" font-size="4.6" fill="#e8e8e8" text-anchor="middle" letter-spacing="-0.2">(L)</text>
<text x="263.5" y="83" font-family="Liberation Sans, sans-serif" font-size="4.6" fill="#e8e8e8" text-anchor="middle" letter-spacing="-0.2">R59</text>
<text x="288.5" y="83" font-family="Liberation Sans, sans-serif" font-size="4.6" fill="#e8e8e8" text-anchor="middle" letter-spacing="-0.2">R58</text>
<text x="263.5" y="90" font-family="Liberation Sans, sans-serif" font-size="4.6" fill="#e8e8e8" text-anchor="middle" letter-spacing="-0.2">(L)</text>
<text x="288.5" y="90" font-family="Liberation Sans, sans-serif" font-size="4.6" fill="#e8e8e8" text-anchor="middle" letter-spacing="-0.2">(L)</text>
<text x="263.5" y="99" font-family="Liberation Sans, sans-serif" font-size="4.6" fill="#e8e8e8" text-anchor="middle" letter-spacing="-0.2">R63</text>
<text x="288.5" y="99" font-family="Liberation Sans, sans-serif" font-size="4.6" fill="#e8e8e8" text-anchor="middle" letter-spacing="-0.2">R55</text>
<text x="263.5" y="106.5" font-family="Liberation Sans, sans-serif" font-size="4.6" fill="#e8e8e8" text-anchor="middle" letter-spacing="-0.2">(L)</text>
<text x="288.5" y="106.5" font-family="Liberation Sans, sans-serif" font-size="4.6" fill="#e8e8e8" text-anchor="middle" letter-spacing="-0.2">(L)</text>
<text x="263.5" y="115" font-family="Liberation Sans, sans-serif" font-size="4.6" fill="#e8e8e8" text-anchor="middle" letter-spacing="-0.2">R71</text>
<text x="288.5" y="115" font-family="Liberation Sans, sans-serif" font-size="4.6" fill="#e8e8e8" text-anchor="middle" letter-spacing="-0.2">R51</text>
<text x="263.5" y="122.5" font-family="Liberation Sans, sans-serif" font-size="4.6" fill="#e8e8e8" text-anchor="middle" letter-spacing="-0.2">(L)</text>
<text x="288.5" y="122.5" font-family="Liberation Sans, sans-serif" font-size="4.6" fill="#e8e8e8" text-anchor="middle" letter-spacing="-0.2">(L)</text>
<text x="263.5" y="131" font-family="Liberation Sans, sans-serif" font-size="4.6" fill="#e8e8e8" text-anchor="middle" letter-spacing="-0.2">R67</text>
<text x="288.5" y="131" font-family="Liberation Sans, sans-serif" font-size="4.6" fill="#e8e8e8" text-anchor="middle" letter-spacing="-0.2">R69</text>
<text x="263.5" y="138.5" font-family="Liberation Sans, sans-serif" font-size="4.6" fill="#e8e8e8" text-anchor="middle" letter-spacing="-0.2">(L)</text>
<text x="288.5" y="138.5" font-family="Liberation Sans, sans-serif" font-size="4.6" fill="#e8e8e8" text-anchor="middle" letter-spacing="-0.2">(L)</text>
<text x="263.5" y="147" font-family="Liberation Sans, sans-serif" font-size="4.6" fill="#e8e8e8" text-anchor="middle" letter-spacing="-0.2">R68</text>
<text x="288.5" y="147" font-family="Liberation Sans, sans-serif" font-size="4.6" fill="#e8e8e8" text-anchor="middle" letter-spacing="-0.2">R66</text>
<text x="263.5" y="154.5" font-family="Liberation Sans, sans-serif" font-size="4.6" fill="#e8e8e8" text-anchor="middle" letter-spacing="-0.2">(L)</text>
<text x="288.5" y="154.5" font-family="Liberation Sans, sans-serif" font-size="4.6" fill="#e8e8e8" text-anchor="middle" letter-spacing="-0.2">(L)</text>
<text x="295.5" y="176.5" font-family="Liberation Sans, sans-serif" font-size="4.6" fill="#e8e8e8" text-anchor="middle" letter-spacing="-0.2">L20</text>
<text x="295.5" y="184" font-family="Liberation Sans, sans-serif" font-size="4.6" fill="#e8e8e8" text-anchor="middle" letter-spacing="-0.2">(L)</text>
<text x="661" y="198.5" font-family="Liberation Sans, sans-serif" font-size="4.6" fill="#e8e8e8" text-anchor="middle" letter-spacing="-0.2">CN6</text>
<text x="661" y="206" font-family="Liberation Sans, sans-serif" font-size="4.6" fill="#e8e8e8" text-anchor="middle" letter-spacing="-0.2">(L)</text>
<text x="461" y="267" font-family="Liberation Sans, sans-serif" font-size="4.6" fill="#e8e8e8" text-anchor="middle" letter-spacing="-0.2">CA83</text>
<text x="461" y="274.5" font-family="Liberation Sans, sans-serif" font-size="4.6" fill="#e8e8e8" text-anchor="middle" letter-spacing="-0.2">(L)</text>
<text x="581" y="215.5" font-family="Liberation Sans, sans-serif" font-size="4.6" fill="#e8e8e8" text-anchor="middle" letter-spacing="-0.2">CA86</text>
<text x="581" y="222" font-family="Liberation Sans, sans-serif" font-size="4.6" fill="#e8e8e8" text-anchor="middle" letter-spacing="-0.2">(L)</text>
<text x="600" y="219.5" font-family="Liberation Sans, sans-serif" font-size="4.6" fill="#e8e8e8" text-anchor="middle" letter-spacing="-0.2">CA87</text>
<text x="600" y="227" font-family="Liberation Sans, sans-serif" font-size="4.6" fill="#e8e8e8" text-anchor="middle" letter-spacing="-0.2">(L)</text>
<text x="5" y="326.5" font-family="Liberation Sans, sans-serif" font-size="4.4" fill="#f0b0a0" text-anchor="middle" letter-spacing="-0.2">x4)</text>
<rect x="0" y="80" width="1.2" height="365" fill="#dcdcdc"/>
</g>
</svg>
<div class="a" style="left:849.4px;top:80.0px;width:2.2px;height:365.0px;background:#d6d6d6"></div>
<div class="a" style="left:851.5px;top:80.0px;width:170.0px;height:365.0px;background:#f0f0f0"></div>
<div class="a" style="left:851.5px;top:80.0px;width:168.5px;height:11.4px;background:linear-gradient(#f4f8e4,#e6efc8)"></div>
<div class="a" style="left:851.5px;top:91.4px;width:168.5px;height:2.8px;background:#e2e2e2"></div>
<div class="a" style="left:862.80px;top:83.26px;font-size:6.80px;letter-spacing:-0.228px;color:#1a1a1a;">Layer Settings</div>
<div class="a" style="left:852.6px;top:94.3px;width:167.4px;height:10.6px;background:linear-gradient(#eceef6,#dcdfea);border-bottom:1px solid #c8ccd8;box-sizing:border-box"></div>
<div class="a" style="left:865.70px;top:96.66px;font-size:6.80px;letter-spacing:-0.363px;color:#2a44dc;">Layer Set</div>
<div class="a" style="left:1006.6px;top:101.2px;width:6.4px;height:1.5px;background:#222"></div>
<div class="a" style="left:857.4px;top:110.9px;width:139.3px;height:99.2px;background:#fff;border:1px solid #c4c4c4;box-sizing:border-box"></div>
<div class="a" style="left:902.90px;top:115.46px;font-size:6.80px;letter-spacing:-0.136px;color:#333;">Layer set list</div>
<div class="a" style="left:859.20px;top:128.06px;font-size:6.80px;letter-spacing:-1.763px;color:#333;">L2</div>
<div class="a" style="left:858.4px;top:137.6px;width:126.0px;height:0.8px;background:#efefef"></div>
<div class="a" style="left:859.20px;top:141.36px;font-size:6.80px;letter-spacing:-1.763px;color:#333;">L3</div>
<div class="a" style="left:858.4px;top:150.9px;width:126.0px;height:0.8px;background:#efefef"></div>
<div class="a" style="left:859.20px;top:154.66px;font-size:6.80px;letter-spacing:-1.763px;color:#333;">L4</div>
<div class="a" style="left:858.4px;top:164.2px;width:126.0px;height:0.8px;background:#efefef"></div>
<div class="a" style="left:859.20px;top:167.96px;font-size:6.80px;letter-spacing:-1.763px;color:#333;">L5</div>
<div class="a" style="left:858.4px;top:177.5px;width:126.0px;height:0.8px;background:#efefef"></div>
<div class="a" style="left:859.20px;top:181.26px;font-size:6.80px;letter-spacing:-1.763px;color:#333;">L6</div>
<div class="a" style="left:858.4px;top:190.8px;width:126.0px;height:0.8px;background:#efefef"></div>
<div class="a" style="left:859.20px;top:194.56px;font-size:6.80px;letter-spacing:-1.763px;color:#333;">L7</div>
<div class="a" style="left:858.4px;top:204.1px;width:126.0px;height:0.8px;background:#efefef"></div>
<div class="a" style="left:859.2px;top:206.3px;height:3.2px;overflow:hidden;font-size:6.8px;letter-spacing:-0.4px;color:#333">L8</div>
<div class="a" style="left:986.5px;top:111.9px;width:9.2px;height:97.2px;background:#f0f0f0"></div>
<div class="a" style="left:987.5px;top:121.0px;width:7.6px;height:31.6px;background:#cdcdcd"></div>
<div class="a" style="left:999.9px;top:137.7px;width:13.0px;height:12.4px;background:#e4e4e4;border:1px solid #c4c4c4;box-sizing:border-box"></div>
<div class="a" style="left:999.9px;top:154.5px;width:13.0px;height:12.4px;background:#e4e4e4;border:1px solid #c4c4c4;box-sizing:border-box"></div>
<div class="a" style="left:999.9px;top:171.5px;width:13.0px;height:12.4px;background:#e4e4e4;border:1px solid #c4c4c4;box-sizing:border-box"></div>
<div class="a" style="left:852.6px;top:218.3px;width:167.4px;height:10.6px;background:linear-gradient(#eceef6,#dcdfea);border-bottom:1px solid #c8ccd8;box-sizing:border-box"></div>
<div class="a" style="left:865.70px;top:220.76px;font-size:6.80px;letter-spacing:-0.290px;color:#2a44dc;">Layer View</div>
<div class="a" style="left:852.3px;top:231.0px;width:120.8px;height:182.1px;background:#fff"></div>
<div class="a" style="left:868.9px;top:242.2px;width:55.1px;height:170.9px;background:#ffffd6"></div>
<div class="a" style="left:852.3px;top:231px;width:120.8px;height:182.1px;overflow:hidden">
<div class="a" style="left:5.1px;top:14.2px;width:6.0px;height:6.0px;border-radius:50%;background:radial-gradient(circle at 40% 35%,#ececec,#b0b0b0 65%,#7c7c7c)"></div>
<div class="a" style="left:18.50px;top:14.26px;font-size:6.80px;letter-spacing:0.011px;color:#333;">Board outline</div>
<div class="a" style="left:76.7px;top:13.8px;width:6.8px;height:6.8px;background:#fff;border:1px solid #8c8c8c;box-sizing:border-box"></div>
<svg width="7" height="7" viewBox="0 0 7 7" style="left:76.6px;top:13.7px"><path d="M1.6 3.6 L3 5 L5.4 1.9" fill="none" stroke="#666" stroke-width="0.9"/></svg>
<div class="a" style="left:109.4px;top:13.8px;width:6.8px;height:6.8px;background:#fff;border:1px solid #8c8c8c;box-sizing:border-box"></div>
<svg width="7" height="7" viewBox="0 0 7 7" style="left:109.3px;top:13.7px"><path d="M1.6 3.6 L3 5 L5.4 1.9" fill="none" stroke="#666" stroke-width="0.9"/></svg>
<div class="a" style="left:92.2px;top:12.6px;width:9.4px;height:9.2px;background:#ffffff;border:1px solid #8a8a8a;border-radius:1px;box-sizing:border-box"></div>
<div class="a" style="left:0.0px;top:23.2px;width:16.6px;height:12.0px;background:#e6f4fa"></div>
<div class="a" style="left:71.7px;top:23.2px;width:49.1px;height:12.0px;background:#e6f4fa"></div>
<div class="a" style="left:5.1px;top:26.2px;width:6.0px;height:6.0px;border-radius:50%;background:radial-gradient(circle at 40% 35%,#ececec,#b0b0b0 65%,#7c7c7c)"></div>
<div class="a" style="left:18.50px;top:26.26px;font-size:6.80px;letter-spacing:-0.129px;color:#333;">Layout Area</div>
<div class="a" style="left:76.7px;top:25.8px;width:6.8px;height:6.8px;background:#fff;border:1px solid #8c8c8c;box-sizing:border-box"></div>
<svg width="7" height="7" viewBox="0 0 7 7" style="left:76.6px;top:25.7px"><path d="M1.6 3.6 L3 5 L5.4 1.9" fill="none" stroke="#666" stroke-width="0.9"/></svg>
<div class="a" style="left:109.4px;top:25.8px;width:6.8px;height:6.8px;background:#fff;border:1px solid #8c8c8c;box-sizing:border-box"></div>
<svg width="7" height="7" viewBox="0 0 7 7" style="left:109.3px;top:25.7px"><path d="M1.6 3.6 L3 5 L5.4 1.9" fill="none" stroke="#666" stroke-width="0.9"/></svg>
<div class="a" style="left:92.2px;top:24.6px;width:9.4px;height:9.2px;background:#cc1414;border:1px solid #6a6250;border-radius:1px;box-sizing:border-box"></div>
<div class="a" style="left:5.1px;top:38.2px;width:6.0px;height:6.0px;border-radius:50%;background:radial-gradient(circle at 40% 35%,#ececec,#b0b0b0 65%,#7c7c7c)"></div>
<div class="a" style="left:18.50px;top:38.26px;font-size:6.80px;letter-spacing:0.138px;color:#333;">Hole</div>
<div class="a" style="left:76.7px;top:37.8px;width:6.8px;height:6.8px;background:#fff;border:1px solid #8c8c8c;box-sizing:border-box"></div>
<svg width="7" height="7" viewBox="0 0 7 7" style="left:76.6px;top:37.7px"><path d="M1.6 3.6 L3 5 L5.4 1.9" fill="none" stroke="#666" stroke-width="0.9"/></svg>
<div class="a" style="left:109.4px;top:37.8px;width:6.8px;height:6.8px;background:#fff;border:1px solid #8c8c8c;box-sizing:border-box"></div>
<svg width="7" height="7" viewBox="0 0 7 7" style="left:109.3px;top:37.7px"><path d="M1.6 3.6 L3 5 L5.4 1.9" fill="none" stroke="#666" stroke-width="0.9"/></svg>
<div class="a" style="left:92.2px;top:36.6px;width:9.4px;height:9.2px;background:#ffffff;border:1px solid #8a8a8a;border-radius:1px;box-sizing:border-box"></div>
<div class="a" style="left:0.0px;top:47.2px;width:16.6px;height:12.0px;background:#e6f4fa"></div>
<div class="a" style="left:71.7px;top:47.2px;width:49.1px;height:12.0px;background:#e6f4fa"></div>
<div class="a" style="left:5.1px;top:50.2px;width:6.0px;height:6.0px;border-radius:50%;background:radial-gradient(circle at 40% 35%,#ececec,#b0b0b0 65%,#7c7c7c)"></div>
<div class="a" style="left:18.50px;top:50.26px;font-size:6.80px;letter-spacing:-0.195px;color:#333;">Rule Area</div>
<div class="a" style="left:76.7px;top:49.8px;width:6.8px;height:6.8px;background:#fff;border:1px solid #8c8c8c;box-sizing:border-box"></div>
<div class="a" style="left:109.4px;top:49.8px;width:6.8px;height:6.8px;background:#fff;border:1px solid #8c8c8c;box-sizing:border-box"></div>
<svg width="7" height="7" viewBox="0 0 7 7" style="left:109.3px;top:49.7px"><path d="M1.6 3.6 L3 5 L5.4 1.9" fill="none" stroke="#666" stroke-width="0.9"/></svg>
<div class="a" style="left:92.2px;top:48.6px;width:9.4px;height:9.2px;background:#f6d878;border:1px solid #6a6250;border-radius:1px;box-sizing:border-box"></div>
<div class="a" style="left:5.1px;top:62.2px;width:6.0px;height:6.0px;border-radius:50%;background:radial-gradient(circle at 40% 35%,#9ab8ff,#2a50d0 60%,#1a2c90)"></div>
<div class="a" style="left:18.50px;top:62.26px;font-size:6.80px;letter-spacing:-0.052px;color:#333;">Conductor-1</div>
<div class="a" style="left:76.7px;top:61.8px;width:6.8px;height:6.8px;background:#fff;border:1px solid #8c8c8c;box-sizing:border-box"></div>
<svg width="7" height="7" viewBox="0 0 7 7" style="left:76.6px;top:61.7px"><path d="M1.6 3.6 L3 5 L5.4 1.9" fill="none" stroke="#666" stroke-width="0.9"/></svg>
<div class="a" style="left:109.4px;top:61.8px;width:6.8px;height:6.8px;background:#fff;border:1px solid #8c8c8c;box-sizing:border-box"></div>
<svg width="7" height="7" viewBox="0 0 7 7" style="left:109.3px;top:61.7px"><path d="M1.6 3.6 L3 5 L5.4 1.9" fill="none" stroke="#666" stroke-width="0.9"/></svg>
<div class="a" style="left:92.2px;top:60.6px;width:9.4px;height:9.2px;background:#fdf6c0;border:1px solid #6a6250;border-radius:1px;box-sizing:border-box"></div>
<div class="a" style="left:0.0px;top:71.2px;width:16.6px;height:12.0px;background:#e6f4fa"></div>
<div class="a" style="left:71.7px;top:71.2px;width:49.1px;height:12.0px;background:#e6f4fa"></div>
<div class="a" style="left:5.1px;top:74.2px;width:6.0px;height:6.0px;border-radius:50%;background:radial-gradient(circle at 40% 35%,#ececec,#b0b0b0 65%,#7c7c7c)"></div>
<div class="a" style="left:18.50px;top:74.26px;font-size:6.80px;letter-spacing:-0.002px;color:#333;">Conductor-2</div>
<div class="a" style="left:76.7px;top:73.8px;width:6.8px;height:6.8px;background:#fff;border:1px solid #8c8c8c;box-sizing:border-box"></div>
<svg width="7" height="7" viewBox="0 0 7 7" style="left:76.6px;top:73.7px"><path d="M1.6 3.6 L3 5 L5.4 1.9" fill="none" stroke="#666" stroke-width="0.9"/></svg>
<div class="a" style="left:109.4px;top:73.8px;width:6.8px;height:6.8px;background:#fff;border:1px solid #8c8c8c;box-sizing:border-box"></div>
<svg width="7" height="7" viewBox="0 0 7 7" style="left:109.3px;top:73.7px"><path d="M1.6 3.6 L3 5 L5.4 1.9" fill="none" stroke="#666" stroke-width="0.9"/></svg>
<div class="a" style="left:92.2px;top:72.6px;width:9.4px;height:9.2px;background:#fdf6c0;border:1px solid #6a6250;border-radius:1px;box-sizing:border-box"></div>
<div class="a" style="left:5.1px;top:86.2px;width:6.0px;height:6.0px;border-radius:50%;background:radial-gradient(circle at 40% 35%,#ececec,#b0b0b0 65%,#7c7c7c)"></div>
<div class="a" style="left:18.50px;top:86.26px;font-size:6.80px;letter-spacing:-0.002px;color:#333;">Conductor-3</div>
<div class="a" style="left:76.7px;top:85.8px;width:6.8px;height:6.8px;background:#fff;border:1px solid #8c8c8c;box-sizing:border-box"></div>
<svg width="7" height="7" viewBox="0 0 7 7" style="left:76.6px;top:85.7px"><path d="M1.6 3.6 L3 5 L5.4 1.9" fill="none" stroke="#666" stroke-width="0.9"/></svg>
<div class="a" style="left:109.4px;top:85.8px;width:6.8px;height:6.8px;background:#fff;border:1px solid #8c8c8c;box-sizing:border-box"></div>
<svg width="7" height="7" viewBox="0 0 7 7" style="left:109.3px;top:85.7px"><path d="M1.6 3.6 L3 5 L5.4 1.9" fill="none" stroke="#666" stroke-width="0.9"/></svg>
<div class="a" style="left:92.2px;top:84.6px;width:9.4px;height:9.2px;background:#fdf6c0;border:1px solid #6a6250;border-radius:1px;box-sizing:border-box"></div>
<div class="a" style="left:0.0px;top:95.2px;width:16.6px;height:12.0px;background:#e6f4fa"></div>
<div class="a" style="left:71.7px;top:95.2px;width:49.1px;height:12.0px;background:#e6f4fa"></div>
<div class="a" style="left:5.1px;top:98.2px;width:6.0px;height:6.0px;border-radius:50%;background:radial-gradient(circle at 40% 35%,#ececec,#b0b0b0 65%,#7c7c7c)"></div>
<div class="a" style="left:18.50px;top:98.26px;font-size:6.80px;letter-spacing:-0.002px;color:#333;">Conductor-4</div>
<div class="a" style="left:76.7px;top:97.8px;width:6.8px;height:6.8px;background:#fff;border:1px solid #8c8c8c;box-sizing:border-box"></div>
<svg width="7" height="7" viewBox="0 0 7 7" style="left:76.6px;top:97.7px"><path d="M1.6 3.6 L3 5 L5.4 1.9" fill="none" stroke="#666" stroke-width="0.9"/></svg>
<div class="a" style="left:109.4px;top:97.8px;width:6.8px;height:6.8px;background:#fff;border:1px solid #8c8c8c;box-sizing:border-box"></div>
<svg width="7" height="7" viewBox="0 0 7 7" style="left:109.3px;top:97.7px"><path d="M1.6 3.6 L3 5 L5.4 1.9" fill="none" stroke="#666" stroke-width="0.9"/></svg>
<div class="a" style="left:92.2px;top:96.6px;width:9.4px;height:9.2px;background:#fdf6c0;border:1px solid #6a6250;border-radius:1px;box-sizing:border-box"></div>
<div class="a" style="left:5.1px;top:110.2px;width:6.0px;height:6.0px;border-radius:50%;background:radial-gradient(circle at 40% 35%,#ececec,#b0b0b0 65%,#7c7c7c)"></div>
<div class="a" style="left:18.50px;top:110.26px;font-size:6.80px;letter-spacing:-0.002px;color:#333;">Conductor-5</div>
<div class="a" style="left:76.7px;top:109.8px;width:6.8px;height:6.8px;background:#fff;border:1px solid #8c8c8c;box-sizing:border-box"></div>
<svg width="7" height="7" viewBox="0 0 7 7" style="left:76.6px;top:109.7px"><path d="M1.6 3.6 L3 5 L5.4 1.9" fill="none" stroke="#666" stroke-width="0.9"/></svg>
<div class="a" style="left:109.4px;top:109.8px;width:6.8px;height:6.8px;background:#fff;border:1px solid #8c8c8c;box-sizing:border-box"></div>
<svg width="7" height="7" viewBox="0 0 7 7" style="left:109.3px;top:109.7px"><path d="M1.6 3.6 L3 5 L5.4 1.9" fill="none" stroke="#666" stroke-width="0.9"/></svg>
<div class="a" style="left:92.2px;top:108.6px;width:9.4px;height:9.2px;background:#f6d468;border:1px solid #6a6250;border-radius:1px;box-sizing:border-box"></div>
<div class="a" style="left:0.0px;top:119.2px;width:16.6px;height:12.0px;background:#e6f4fa"></div>
<div class="a" style="left:71.7px;top:119.2px;width:49.1px;height:12.0px;background:#e6f4fa"></div>
<div class="a" style="left:5.1px;top:122.2px;width:6.0px;height:6.0px;border-radius:50%;background:radial-gradient(circle at 40% 35%,#ececec,#b0b0b0 65%,#7c7c7c)"></div>
<div class="a" style="left:18.50px;top:122.26px;font-size:6.80px;letter-spacing:-0.002px;color:#333;">Conductor-6</div>
<div class="a" style="left:76.7px;top:121.8px;width:6.8px;height:6.8px;background:#fff;border:1px solid #8c8c8c;box-sizing:border-box"></div>
<svg width="7" height="7" viewBox="0 0 7 7" style="left:76.6px;top:121.7px"><path d="M1.6 3.6 L3 5 L5.4 1.9" fill="none" stroke="#666" stroke-width="0.9"/></svg>
<div class="a" style="left:109.4px;top:121.8px;width:6.8px;height:6.8px;background:#fff;border:1px solid #8c8c8c;box-sizing:border-box"></div>
<svg width="7" height="7" viewBox="0 0 7 7" style="left:109.3px;top:121.7px"><path d="M1.6 3.6 L3 5 L5.4 1.9" fill="none" stroke="#666" stroke-width="0.9"/></svg>
<div class="a" style="left:92.2px;top:120.6px;width:9.4px;height:9.2px;background:#f6d468;border:1px solid #6a6250;border-radius:1px;box-sizing:border-box"></div>
<div class="a" style="left:5.1px;top:134.2px;width:6.0px;height:6.0px;border-radius:50%;background:radial-gradient(circle at 40% 35%,#ececec,#b0b0b0 65%,#7c7c7c)"></div>
<div class="a" style="left:18.50px;top:134.26px;font-size:6.80px;letter-spacing:-0.002px;color:#333;">Conductor-7</div>
<div class="a" style="left:76.7px;top:133.8px;width:6.8px;height:6.8px;background:#fff;border:1px solid #8c8c8c;box-sizing:border-box"></div>
<div class="a" style="left:109.4px;top:133.8px;width:6.8px;height:6.8px;background:#fff;border:1px solid #8c8c8c;box-sizing:border-box"></div>
<svg width="7" height="7" viewBox="0 0 7 7" style="left:109.3px;top:133.7px"><path d="M1.6 3.6 L3 5 L5.4 1.9" fill="none" stroke="#666" stroke-width="0.9"/></svg>
<div class="a" style="left:92.2px;top:132.6px;width:9.4px;height:9.2px;background:#f6d468;border:1px solid #6a6250;border-radius:1px;box-sizing:border-box"></div>
<div class="a" style="left:0.0px;top:143.2px;width:16.6px;height:12.0px;background:#e6f4fa"></div>
<div class="a" style="left:71.7px;top:143.2px;width:49.1px;height:12.0px;background:#e6f4fa"></div>
<div class="a" style="left:5.1px;top:146.2px;width:6.0px;height:6.0px;border-radius:50%;background:radial-gradient(circle at 40% 35%,#ececec,#b0b0b0 65%,#7c7c7c)"></div>
<div class="a" style="left:18.50px;top:146.26px;font-size:6.80px;letter-spacing:-0.002px;color:#333;">Conductor-8</div>
<div class="a" style="left:76.7px;top:145.8px;width:6.8px;height:6.8px;background:#fff;border:1px solid #8c8c8c;box-sizing:border-box"></div>
<svg width="7" height="7" viewBox="0 0 7 7" style="left:76.6px;top:145.7px"><path d="M1.6 3.6 L3 5 L5.4 1.9" fill="none" stroke="#666" stroke-width="0.9"/></svg>
<div class="a" style="left:109.4px;top:145.8px;width:6.8px;height:6.8px;background:#fff;border:1px solid #8c8c8c;box-sizing:border-box"></div>
<svg width="7" height="7" viewBox="0 0 7 7" style="left:109.3px;top:145.7px"><path d="M1.6 3.6 L3 5 L5.4 1.9" fill="none" stroke="#666" stroke-width="0.9"/></svg>
<div class="a" style="left:92.2px;top:144.6px;width:9.4px;height:9.2px;background:#f6d468;border:1px solid #6a6250;border-radius:1px;box-sizing:border-box"></div>
<div class="a" style="left:5.1px;top:158.2px;width:6.0px;height:6.0px;border-radius:50%;background:radial-gradient(circle at 40% 35%,#ececec,#b0b0b0 65%,#7c7c7c)"></div>
<div class="a" style="left:18.50px;top:158.26px;font-size:6.80px;letter-spacing:-0.002px;color:#333;">Conductor-9</div>
<div class="a" style="left:76.7px;top:157.8px;width:6.8px;height:6.8px;background:#fff;border:1px solid #8c8c8c;box-sizing:border-box"></div>
<div class="a" style="left:109.4px;top:157.8px;width:6.8px;height:6.8px;background:#fff;border:1px solid #8c8c8c;box-sizing:border-box"></div>
<svg width="7" height="7" viewBox="0 0 7 7" style="left:109.3px;top:157.7px"><path d="M1.6 3.6 L3 5 L5.4 1.9" fill="none" stroke="#666" stroke-width="0.9"/></svg>
<div class="a" style="left:92.2px;top:156.6px;width:9.4px;height:9.2px;background:#f6d468;border:1px solid #6a6250;border-radius:1px;box-sizing:border-box"></div>
<div class="a" style="left:0.0px;top:167.2px;width:16.6px;height:12.0px;background:#e6f4fa"></div>
<div class="a" style="left:71.7px;top:167.2px;width:49.1px;height:12.0px;background:#e6f4fa"></div>
<div class="a" style="left:5.1px;top:170.2px;width:6.0px;height:6.0px;border-radius:50%;background:radial-gradient(circle at 40% 35%,#ececec,#b0b0b0 65%,#7c7c7c)"></div>
<div class="a" style="left:18.50px;top:170.26px;font-size:6.80px;letter-spacing:-0.036px;color:#333;">Conductor-10</div>
<div class="a" style="left:76.7px;top:169.8px;width:6.8px;height:6.8px;background:#fff;border:1px solid #8c8c8c;box-sizing:border-box"></div>
<div class="a" style="left:109.4px;top:169.8px;width:6.8px;height:6.8px;background:#fff;border:1px solid #8c8c8c;box-sizing:border-box"></div>
<svg width="7" height="7" viewBox="0 0 7 7" style="left:109.3px;top:169.7px"><path d="M1.6 3.6 L3 5 L5.4 1.9" fill="none" stroke="#666" stroke-width="0.9"/></svg>
<div class="a" style="left:92.2px;top:168.6px;width:9.4px;height:9.2px;background:#f6d468;border:1px solid #6a6250;border-radius:1px;box-sizing:border-box"></div>
<div class="a" style="left:5.1px;top:182.2px;width:6.0px;height:6.0px;border-radius:50%;background:radial-gradient(circle at 40% 35%,#ececec,#b0b0b0 65%,#7c7c7c)"></div>
<div class="a" style="left:18.50px;top:182.26px;font-size:6.80px;letter-spacing:-0.045px;color:#333;">Conductor-11</div>
<div class="a" style="left:76.7px;top:181.8px;width:6.8px;height:6.8px;background:#fff;border:1px solid #8c8c8c;box-sizing:border-box"></div>
<svg width="7" height="7" viewBox="0 0 7 7" style="left:76.6px;top:181.7px"><path d="M1.6 3.6 L3 5 L5.4 1.9" fill="none" stroke="#666" stroke-width="0.9"/></svg>
<div class="a" style="left:109.4px;top:181.8px;width:6.8px;height:6.8px;background:#fff;border:1px solid #8c8c8c;box-sizing:border-box"></div>
<svg width="7" height="7" viewBox="0 0 7 7" style="left:109.3px;top:181.7px"><path d="M1.6 3.6 L3 5 L5.4 1.9" fill="none" stroke="#666" stroke-width="0.9"/></svg>
<div class="a" style="left:92.2px;top:180.6px;width:9.4px;height:9.2px;background:#e8c830;border:1px solid #6a6250;border-radius:1px;box-sizing:border-box"></div>
<div class="a" style="left:71.9px;top:0.0px;width:0.8px;height:183.0px;background:#fff"></div>
<div class="a" style="left:88.3px;top:0.0px;width:0.8px;height:183.0px;background:#fff"></div>
<div class="a" style="left:105.5px;top:0.0px;width:0.8px;height:183.0px;background:#fff"></div>
</div>
<div class="a" style="left:880.00px;top:233.96px;font-size:6.80px;letter-spacing:-0.334px;color:#333;">Layer name</div>
<svg width="130" height="14" viewBox="0 0 130 14" style="left:852px;top:230px"><path d="M6.6 10.6 L7.4 8 L11.6 3.2 L13.4 4.8 L9.2 9.6 Z" fill="#2f5fd0"/><path d="M6.6 10.6 L7.2 8.6 L8.4 9.8 Z" fill="#223"/><path d="M11.6 3.2 L12.6 2.2 L14.2 3.8 L13.4 4.8 Z" fill="#5a7ae0"/><ellipse cx="80.4" cy="6.6" rx="4.4" ry="2.8" fill="#c8d0f0" stroke="#3a48a0" stroke-width="0.7"/><circle cx="80.4" cy="6.6" r="2" fill="#2a34a0"/><circle cx="97.2" cy="6.8" r="3.8" fill="#e8c040"/><circle cx="95.8" cy="5.6" r="1" fill="#d02020"/><circle cx="98.4" cy="5.4" r="1" fill="#20a030"/><circle cx="98.6" cy="8.2" r="1" fill="#2040d0"/><path d="M111.4 3 L111.4 9.6 L113 8.2 L114.2 10.8 L115.2 10.2 L114 7.8 L116 7.6 Z" fill="#fff" stroke="#a8b8d8" stroke-width="0.6"/></svg>
<div class="a" style="left:973.1px;top:231.0px;width:8.6px;height:182.1px;background:#e8e8e8"></div>
<div class="a" style="left:852.6px;top:419.6px;width:6.4px;height:6.4px;background:#fff;border:1px solid #666;box-sizing:border-box"></div>
<svg width="7" height="7" viewBox="0 0 7 7" style="left:852.4px;top:419.4px"><path d="M1.6 3.6 L3 5 L5.4 1.9" fill="none" stroke="#444" stroke-width="0.9"/></svg>
<div class="a" style="left:862.20px;top:419.76px;font-size:6.80px;letter-spacing:-0.115px;color:#222;">Active layer view</div>
<div class="a" style="left:857.40px;top:434.66px;font-size:6.80px;letter-spacing:-0.355px;color:#333;">Layer Set:</div>
<div class="a" style="left:933.4px;top:431.3px;width:39.7px;height:11.5px;background:#e2e2e2;border:1px solid #b4b4b4;box-sizing:border-box"></div>
<div class="a" style="left:945.40px;top:434.26px;font-size:6.80px;letter-spacing:-0.493px;color:#222;">Add...</div>
<div class="a" style="left:978.0px;top:431.3px;width:3.7px;height:11.5px;background:#c8c8c8"></div>
<svg width="170" height="150" viewBox="850 80 170 150" style="left:850px;top:80px">
<path d="M853.4 89.6 L856 83.4 L857.2 86 L859.4 87 L856.8 87.8 Z" fill="#1c2a6c"/><path d="M856.8 85 L860.2 86.8 L857.2 88.6 Z" fill="#f0c020"/><path d="M853.4 89.6 L856.8 87.8 L855.6 86.6 Z" fill="#3a70d8"/>
<circle cx="984" cy="86.2" r="3.8" fill="#2346c0"/><text x="984" y="88.4" font-family="Liberation Sans, sans-serif" font-weight="bold" font-size="6" fill="#fff" text-anchor="middle">?</text>
<path d="M996.6 83 L999.6 83 L999.2 86.6 L1000.6 88 L995.6 88 L997 86.6 Z" fill="#4a78e0" stroke="#2a4ab0" stroke-width="0.4"/><path d="M998.1 88 L998.1 90.6" stroke="#2a4ab0" stroke-width="0.8"/>
<path d="M1008.6 83.4 L1014.2 89 M1014.2 83.4 L1008.6 89" stroke="#1a1a1a" stroke-width="1.5"/>
<circle cx="857.6" cy="98.0" r="2.8" fill="#f0c030" stroke="#c08a10" stroke-width="0.5"/><path d="M855 100.2 L862.6 100.2 L862.6 103.0 L855 103.0 Z" fill="#f4f4fa" stroke="#d04040" stroke-width="0.7"/><path d="M856 101.6 L861.6 101.6" stroke="#4060d0" stroke-width="0.7"/>
<circle cx="857.6" cy="222.1" r="2.8" fill="#f0c030" stroke="#c08a10" stroke-width="0.5"/><path d="M855 224.3 L862.6 224.3 L862.6 227.1 L855 227.1 Z" fill="#f4f4fa" stroke="#d04040" stroke-width="0.7"/><path d="M856 225.7 L861.6 225.7" stroke="#4060d0" stroke-width="0.7"/>
<path d="M989 117 L991.1 114.8 L993.2 117" fill="none" stroke="#555" stroke-width="0.8"/><path d="M989 204 L991.1 206.2 L993.2 204" fill="none" stroke="#555" stroke-width="0.8"/>
<path d="M1002.6 147.4 L1010.2 147.4 L1006.4 140.6 Z" fill="#1f48d8"/><path d="M1002.6 157.4 L1010.2 157.4 L1006.4 164.2 Z" fill="#1f48d8"/>
<rect x="1003.4" y="174.4" width="6" height="7" fill="#f4f8ff" stroke="#5a6a9c" stroke-width="0.7"/><path d="M1004.6 176.4 l3.6 0 M1004.6 178 l3.6 0 M1004.6 179.6 l2 0" stroke="#5a6a9c" stroke-width="0.5"/><path d="M1005 180 l3.4 -3.6" stroke="#2f5fd0" stroke-width="0.9"/>
</svg>
<div class="a" style="left:982.2px;top:216.6px;width:38.0px;height:244.0px;background:#f0f0f0;border-left:1px solid #9a9a9a;border-top:1px solid #b0b0b0;box-shadow:-1px 0 3px rgba(0,0,0,.25)"></div>
<div class="a" style="left:983.2px;top:217.6px;width:37.0px;height:28.0px;background:#fff"></div>
<div class="a" style="left:983.2px;top:245.6px;width:37.0px;height:18.8px;background:linear-gradient(#fbfcfe,#e9edf5)"></div>
<div class="a" style="left:983.2px;top:217px;width:36.8px;height:243px;overflow:hidden">
<div class="a" style="left:14.80px;top:6.06px;font-size:6.80px;letter-spacing:-0.279px;color:#222;">PI/EMI A</div>
<div class="a" style="left:3.30px;top:20.36px;font-size:6.80px;letter-spacing:-0.485px;color:#222;">File</div>
<div class="a" style="left:20.50px;top:20.36px;font-size:6.80px;letter-spacing:-0.228px;color:#222;">Setting</div>
<div class="a" style="left:5.2px;top:57.5px;width:60px;height:112.5px;border:1px solid #d4d4d4;box-sizing:border-box"></div>
<div class="a" style="left:8px;top:53px;width:30px;height:9px;background:#f0f0f0"></div>
<div class="a" style="left:9.40px;top:54.56px;font-size:6.80px;letter-spacing:-0.164px;color:#222;">DC (Voltag</div>
<div class="a" style="left:8.10px;top:69.26px;font-size:6.80px;letter-spacing:-0.241px;color:#222;">Power bus</div>
<div class="a" style="left:8.1px;top:81.4px;width:40px;height:84.8px;background:#fff;border:1px solid #c0c0c0;box-sizing:border-box"></div>
<div class="a" style="left:9.1px;top:82.2px;width:40px;height:9.2px;background:#2a5cd8"></div>
<div class="a" style="left:10.20px;top:83.76px;font-size:6.80px;letter-spacing:-0.443px;color:#fff;">VAPDOR</div>
<div class="a" style="left:5.2px;top:177.5px;width:60px;height:100px;border:1px solid #d4d4d4;box-sizing:border-box"></div>
<div class="a" style="left:8px;top:173px;width:30px;height:9px;background:#f0f0f0"></div>
<div class="a" style="left:9.40px;top:174.66px;font-size:6.80px;letter-spacing:-0.026px;color:#222;">Color scal</div>
<div class="a" style="left:23.4px;top:188.5px;width:30px;height:11.5px;background:#e2e2e2;border:1px solid #b4b4b4;box-sizing:border-box"></div>
<div class="a" style="left:24.80px;top:191.66px;font-size:6.80px;letter-spacing:-0.877px;color:#222;">Scale</div>
<div class="a" style="left:11.0px;top:207.6px;width:6.4px;height:6.4px;border-radius:50%;border:1px solid #555;box-sizing:border-box;background:#fff"></div>
<div class="a" style="left:20.50px;top:207.86px;font-size:6.80px;letter-spacing:0.160px;color:#222;">Min. -</div>
<div class="a" style="left:11.0px;top:222.2px;width:6.4px;height:6.4px;border-radius:50%;border:1px solid #555;box-sizing:border-box;background:#fff"></div>
<div class="a" style="left:20.50px;top:222.46px;font-size:6.80px;letter-spacing:0.303px;color:#222;">0 - M</div>
<div class="a" style="left:11.0px;top:235.9px;width:6.4px;height:6.4px;border-radius:50%;border:1px solid #555;box-sizing:border-box;background:#fff"></div>
<div class="a" style="left:12.7px;top:237.6px;width:3px;height:3px;border-radius:50%;background:#222"></div>
<div class="a" style="left:20.50px;top:236.16px;font-size:6.80px;letter-spacing:-0.459px;color:#222;">Any</div>
</div>
<svg width="38" height="50" viewBox="983 217 38 50" style="left:983px;top:217px"><path d="M987.4 229.6 L990 223.4 L991.2 226 L993.4 227 L990.8 227.8 Z" fill="#1c2a6c"/><path d="M990.8 225 L994.2 226.8 L991.2 228.6 Z" fill="#f0c020"/><path d="M987.4 229.6 L990.8 227.8 L989.6 226.6 Z" fill="#3a70d8"/><path d="M992.4 258.6 L993.4 253 L996 253 L996.8 254 L1000.4 254 L1000.4 258.6 Z" fill="#f0d050" stroke="#b89820" stroke-width="0.5"/><path d="M992.4 258.6 L994.4 255.4 L1001.8 255.4 L1000.4 258.6 Z" fill="#f8e480" stroke="#b89820" stroke-width="0.5"/><rect x="1009.8" y="251.6" width="7.2" height="7.4" rx="0.6" fill="#4c62b8"/><rect x="1011.2" y="251.6" width="4.2" height="2.8" fill="#e8ecf8"/><rect x="1011.4" y="255.8" width="3.8" height="3.2" fill="#8e9cd4"/></svg>
<div class="a" style="left:0;top:444.6px;width:983px;height:15.4px;background:#f0f0f0;border-top:1px solid #d9d9d9;box-sizing:border-box"></div>
<div class="a" style="left:55.00px;top:449.77px;font-size:6.60px;letter-spacing:0.018px;color:#222;">Conductor-1</div>
<div class="a" style="left:111.00px;top:449.77px;font-size:6.60px;letter-spacing:0.415px;color:#222;">- All ON -</div>
<div class="a" style="left:755.0px;top:447px;width:46.0px;height:11.4px;background:#fff;border:1px solid #c4c4c4;box-sizing:border-box"></div>
<div class="a" style="left:758.50px;top:449.97px;font-size:6.60px;letter-spacing:-0.103px;color:#222;">G0.1</div>
<div class="a" style="left:826.0px;top:447px;width:45.0px;height:11.4px;background:#fff;border:1px solid #c4c4c4;box-sizing:border-box"></div>
<div class="a" style="left:829.50px;top:449.97px;font-size:6.60px;letter-spacing:-0.103px;color:#222;">G0.1</div>
<svg width="983" height="16" viewBox="0 444 983 16" style="left:0;top:444px">
<rect x="4" y="448.6" width="7.4" height="7.6" fill="#2a50c8" rx="0.8"/><path d="M5.4 454.6 L5.4 450.4 L7.7 453 L10 450.4 L10 454.6" fill="none" stroke="#fff" stroke-width="0.9"/>
<path d="M15.6 451.8 l3 0 l-1.5 1.8 z" fill="#444"/>
<rect x="28.4" y="448.2" width="2.4" height="5" rx="1.2" fill="#3a5cc8"/><path d="M27.2 451.6 q0 3 2.4 3 q2.4 0 2.4 -3 M29.6 454.6 l0 2" fill="none" stroke="#5a6a9c" stroke-width="0.7"/>
<path d="M38.0 447.4 L38.0 458" stroke="#cfcfcf" stroke-width="0.8"/>
<path d="M95.5 447.4 L95.5 458" stroke="#cfcfcf" stroke-width="0.8"/>
<path d="M146.5 447.4 L146.5 458" stroke="#cfcfcf" stroke-width="0.8"/>
<path d="M163.0 447.4 L163.0 458" stroke="#cfcfcf" stroke-width="0.8"/>
<rect x="46.8" y="449" width="3.6" height="7" fill="#fdf6c0" stroke="#b89820" stroke-width="0.8"/>
<path d="M103.2 449.6 L108 449.6 L106.2 452 L106.2 455.4 L105 454.6 L105 452 Z" fill="#3a6ad8"/>
<rect x="544.4" y="446.6" width="21.6" height="12.4" fill="#a8d8f8" stroke="#4aa0e0" stroke-width="0.7"/><path d="M548.6 451 q4 -3.4 8 0 M550 452.8 q2.6 -2.2 5.2 0 M551.4 454.6 q1.2 -1 2.4 0" fill="none" stroke="#2a50c8" stroke-width="0.9"/><circle cx="552.6" cy="456.4" r="0.8" fill="#2a50c8"/><path d="M559.6 451.8 l3 0 l-1.5 1.8 z" fill="#444"/>
<path d="M570.6 447.4 L570.6 458" stroke="#cfcfcf" stroke-width="0.8"/>
<rect x="573.6" y="449.4" width="5.8" height="6.4" fill="#d8d8d8" stroke="#8a8a8a" stroke-width="0.6"/><path d="M574.6 451 l3.8 0 M574.6 452.6 l3.8 0 M574.6 454.2 l3.8 0" stroke="#8a8a8a" stroke-width="0.5"/>
<rect x="587" y="449" width="6.4" height="6.8" rx="1.4" fill="#8a9ac8" stroke="#4a5a9c" stroke-width="0.6"/><rect x="588.6" y="450.8" width="3.2" height="2.4" fill="#e8ecf8"/>
<path d="M600.6 449.4 L606.4 455.8 M606.4 449.4 L600.6 455.8" stroke="#c82020" stroke-width="1.3"/><circle cx="601" cy="456" r="1" fill="#555"/><circle cx="606" cy="456" r="1" fill="#555"/>
<path d="M614 456 L614 449.4 L617.6 449.4 L617.6 452.6 L621 452.6 L621 456 Z" fill="#58b828" stroke="#2a7a10" stroke-width="0.5"/><rect x="617.8" y="453" width="3" height="2.8" fill="#e8d020"/>
<path d="M625 451.8 l3 0 l-1.5 1.8 z" fill="#444"/>
<path d="M635.6 450.6 L640 453 L643 451 M640 453 L642.6 455.4" fill="none" stroke="#c82020" stroke-width="1"/><circle cx="636" cy="450.8" r="1.1" fill="#7a7a8a"/>
<path d="M649.6 447.4 L649.6 458" stroke="#cfcfcf" stroke-width="0.8"/>
<rect x="653.4" y="449.6" width="8.4" height="6.6" fill="#48a828" stroke="#c82020" stroke-width="1"/><rect x="655" y="448.4" width="1.6" height="1.6" fill="#c82020"/><rect x="658.6" y="448.4" width="1.6" height="1.6" fill="#c82020"/>
<rect x="665.4" y="446.8" width="12" height="12" fill="#a8d8f8" stroke="#4aa0e0" stroke-width="0.7"/><ellipse cx="671.4" cy="451" rx="3.8" ry="1.6" fill="#e8f0ff" stroke="#2a50c8" stroke-width="0.7"/><path d="M667.6 451 L667.6 455 q3.8 2.6 7.6 0 L675.2 451" fill="#c8dcf8" stroke="#2a50c8" stroke-width="0.7"/>
<path d="M681.4 447.4 L681.4 458" stroke="#cfcfcf" stroke-width="0.8"/>
<text x="689" y="455" font-family="Liberation Sans, sans-serif" font-weight="bold" font-size="4.8" fill="#d02020" text-anchor="middle" letter-spacing="-0.3">DRC</text>
<path d="M696 451.8 l3 0 l-1.5 1.8 z" fill="#444"/>
<rect x="704" y="446.8" width="20" height="12" fill="#a8d8f8" stroke="#4aa0e0" stroke-width="0.7"/><rect x="707" y="449" width="8" height="6" fill="#fff" stroke="#c82020" stroke-width="0.9"/><path d="M708.6 451.6 L710.6 454.4 L714.6 449.4" fill="none" stroke="#2a50c8" stroke-width="1.2"/><path d="M718.4 451.8 l3 0 l-1.5 1.8 z" fill="#444"/>
<path d="M729.6 447.4 L729.6 458" stroke="#cfcfcf" stroke-width="0.8"/>
<path d="M740 448.4 L737.6 452.4 L739.8 452.4 L738 457 " fill="none" stroke="#d02020" stroke-width="1.2"/>
<path d="M744 451.8 l3 0 l-1.5 1.8 z" fill="#444"/>
<path d="M795.7 451.6 l1.8 1.9 l1.8 -1.9" fill="none" stroke="#555" stroke-width="0.7"/>
<path d="M865.7 451.6 l1.8 1.9 l1.8 -1.9" fill="none" stroke="#555" stroke-width="0.7"/>
<rect x="805" y="446.8" width="19" height="12" fill="#a8d8f8" stroke="#4aa0e0" stroke-width="0.7"/><rect x="808" y="448.8" width="7.6" height="7.8" fill="#f4e8e0" stroke="#c82020" stroke-width="0.7"/><path d="M809.4 450 L812 455.4 L814.4 450" fill="none" stroke="#c82020" stroke-width="0.9"/><path d="M818.4 451.8 l3 0 l-1.5 1.8 z" fill="#444"/>
<rect x="875" y="448.6" width="8.4" height="8.4" fill="#c8d0e8" stroke="#6a7a9c" stroke-width="0.6"/><path d="M876.4 455.6 L876.4 450 L881.6 455.6 L881.6 450" fill="none" stroke="#2a50c8" stroke-width="1"/>
<path d="M886.6 451.8 l3 0 l-1.5 1.8 z" fill="#444"/>
<path d="M896.3 447.4 L896.3 458" stroke="#cfcfcf" stroke-width="0.8"/>
<path d="M940.6 447.4 L940.6 458" stroke="#cfcfcf" stroke-width="0.8"/>
<path d="M968.4 447.4 L968.4 458" stroke="#cfcfcf" stroke-width="0.8"/>
<path d="M901.4 450 L907.4 450 L908.6 455.6 L902.6 455.6 Z" fill="#fce8e8" stroke="#d02020" stroke-width="0.9"/><path d="M902.4 452 l5.4 0" stroke="#d02020" stroke-width="0.7"/>
<ellipse cx="918.2" cy="452.8" rx="2.6" ry="4" fill="#f8c0b8" stroke="#d02020" stroke-width="0.9"/><path d="M915.6 451 l5.2 0 M915.6 453 l5.2 0 M915.6 455 l5.2 0" stroke="#d02020" stroke-width="0.6"/>
<path d="M929.6 456.6 L929.6 450 L935 450" fill="none" stroke="#d02020" stroke-width="1.2"/><circle cx="935.4" cy="449.8" r="1.3" fill="#2a3ca8"/><circle cx="929.6" cy="456.6" r="1" fill="#2a3ca8"/>
<path d="M950.8 448.4 l1.8 2.4 l-3.6 0 z M950.8 457.2 l1.8 -2.4 l-3.6 0 z M946.4 452.8 l2.4 -1.8 l0 3.6 z M955.2 452.8 l-2.4 -1.8 l0 3.6 z" fill="#2a3ca8"/>
<path d="M958.2 451.8 l3 0 l-1.5 1.8 z" fill="#444"/>
<path d="M973.6 451.4 L979 451.4 L981.4 453.6 L978 453.2 L977 455 Z" fill="#2a50c8"/>
</svg>
</div></body></html>
